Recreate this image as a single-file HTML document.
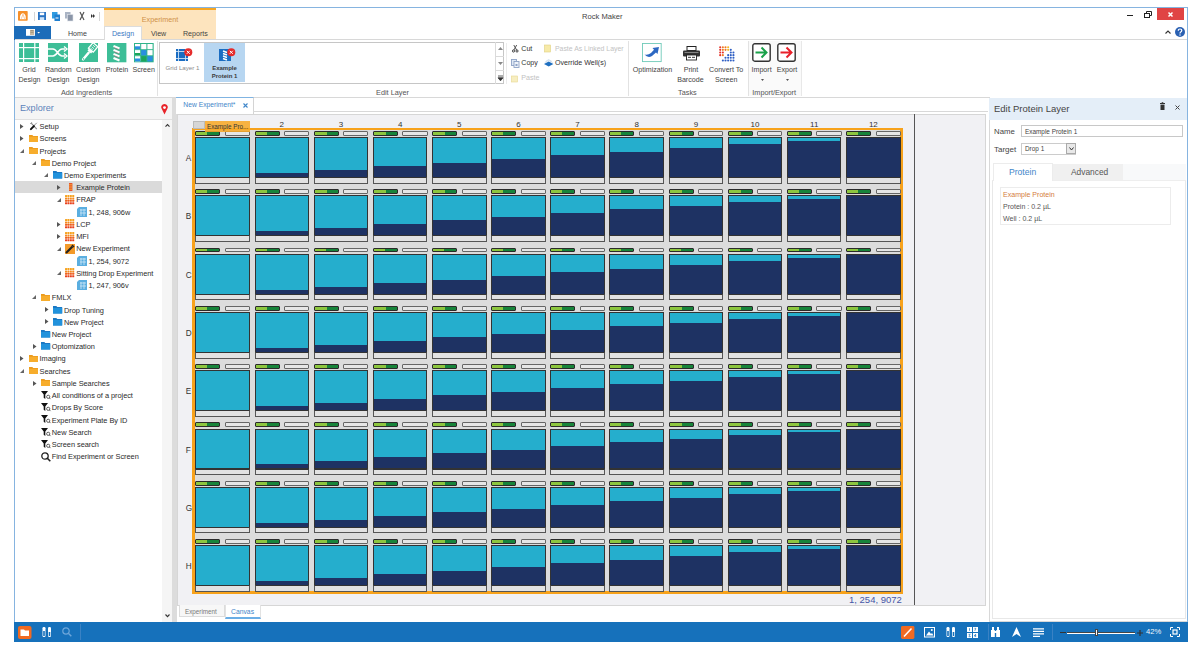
<!DOCTYPE html><html><head><meta charset='utf-8'><style>
*{box-sizing:border-box}
body{margin:0;width:1200px;height:653px;background:#fff;position:relative;overflow:hidden;font-family:"Liberation Sans",sans-serif;color:#333}
.a{position:absolute}
.t{position:absolute;white-space:nowrap;line-height:1}
svg{position:absolute;overflow:visible}
</style></head><body><div class="a" style="left:14px;top:7px;width:1174px;height:635px;border:1px solid #86b4e0;border-bottom:none"></div>
<svg style="left:18px;top:11px" width="9.7" height="9.7" viewBox="0 0 9.7 9.7"><rect x="0" y="0" width="9.7" height="9.7" rx="0.8" fill="#f6902a"/><path d="M2 8.2 Q1.5 4.5 3.2 3 Q4.8 1.6 6.5 3 Q8.3 4.5 7.8 8.2 Z" fill="#fff"/><path d="M3.3 7.8 L5 3.2 L6.6 7.8" stroke="#f8b070" stroke-width="0.7" fill="none"/></svg>
<div class="a" style="left:33.5px;top:12px;width:1px;height:9px;background:#d6d6d6"></div>
<svg style="left:38px;top:12px" width="8" height="8" viewBox="0 0 8 8"><rect x="0" y="0" width="8" height="8" fill="#2a74c4"/><rect x="1.8" y="0.6" width="4.4" height="2.6" fill="#fff"/><rect x="1.8" y="5.2" width="4.4" height="2.8" fill="#cfe3f6"/></svg>
<svg style="left:51.5px;top:11.5px" width="8" height="9" viewBox="0 0 8 9"><rect x="0" y="0" width="5.5" height="6.5" fill="#2f9be0"/><rect x="2.5" y="2.5" width="5.5" height="6.5" fill="#1f7fcf"/><path d="M3.5 6 h3" stroke="#fff" stroke-width="1"/></svg>
<svg style="left:65px;top:11.5px" width="8" height="9" viewBox="0 0 8 9"><rect x="0" y="0" width="5.5" height="6.5" fill="#aab4c4"/><rect x="2.5" y="2.5" width="5.5" height="6.5" fill="#8b96a8" stroke="#dfe3ea" stroke-width="0.6"/></svg>
<svg style="left:79px;top:12px" width="6" height="8" viewBox="0 0 6 8"><path d="M1 0 L5 8 M5 0 L1 8" stroke="#555" stroke-width="1.2"/></svg>
<svg style="left:91px;top:14px" width="4" height="4" viewBox="0 0 4 4"><path d="M0 0 L2 2 L0 4 Z M2 0 L4 2 L2 4 Z" fill="#333"/></svg>
<div class="a" style="left:99px;top:12px;width:1px;height:9px;background:#d6d6d6"></div>
<div class="t" style="left:582px;top:12.6px;font-size:7.6px;color:#444;">Rock Maker</div>
<div class="a" style="left:1127px;top:14.5px;width:6px;height:1.5px;background:#222"></div>
<svg style="left:1144px;top:11px" width="8" height="7" viewBox="0 0 8 7"><rect x="0.5" y="2.5" width="5" height="4" fill="none" stroke="#222" stroke-width="1"/><path d="M2.5 2.5 V0.5 H7.5 V4.5 H5.5" fill="none" stroke="#222" stroke-width="1"/></svg>
<div class="a" style="left:1156.5px;top:8px;width:27px;height:11.5px;background:#e04444"></div>
<svg style="left:1167.5px;top:11.5px" width="5" height="5" viewBox="0 0 5 5"><path d="M0.5 0.5 L4.5 4.5 M4.5 0.5 L0.5 4.5" stroke="#fff" stroke-width="1.5"/></svg>
<svg style="left:1165px;top:30px" width="6" height="4" viewBox="0 0 6 4"><path d="M0.5 3.5 L3 1 L5.5 3.5" stroke="#333" stroke-width="1.1" fill="none"/></svg>
<svg style="left:1175px;top:27px" width="10" height="10" viewBox="0 0 10 10"><circle cx="5" cy="5" r="5" fill="#2a60b2"/><path d="M3.3 3.8 Q3.3 2 5 2 Q6.8 2 6.8 3.6 Q6.8 4.6 5.5 5.2 Q5 5.5 5 6.4" stroke="#fff" stroke-width="1.2" fill="none"/><circle cx="5" cy="8" r="0.7" fill="#fff"/></svg>
<div class="a" style="left:104px;top:8px;width:112px;height:32px;background:#fde4be"></div>
<div class="a" style="left:104px;top:8px;width:112px;height:2px;background:#f6a623"></div>
<div class="t" style="left:141.8px;top:15.5px;font-size:7.2px;color:#cf8f48;">Experiment</div>
<div class="a" style="left:14px;top:26px;width:37px;height:13.5px;background:#1c6cb9"></div>
<svg style="left:25.6px;top:29.2px" width="15" height="7" viewBox="0 0 15 7"><rect x="0" y="0" width="9" height="6.8" fill="#fff"/><rect x="4" y="0.8" width="4.2" height="5.2" fill="#c9b9a0"/><path d="M4.5 1.5 h3 M4.5 3.3 h3" stroke="#8a7a60" stroke-width="0.6"/><path d="M11.3 3.1 H14 L12.65 4.6 Z" fill="#fff"/></svg>
<div class="a" style="left:15px;top:39px;width:1172px;height:1px;background:#d8d8d8"></div>
<div class="a" style="left:104px;top:26px;width:37.5px;height:14px;background:#fff;border:1px solid #dcdcdc;border-bottom:none"></div>
<div class="t" style="left:68px;top:31.3px;font-size:7.1px;color:#444;">Home</div>
<div class="t" style="left:112px;top:31.3px;font-size:7.1px;color:#3a78c2;">Design</div>
<div class="t" style="left:151px;top:31.3px;font-size:7.1px;color:#444;">View</div>
<div class="t" style="left:183px;top:31.3px;font-size:7.1px;color:#444;">Reports</div>
<div class="a" style="left:15px;top:97px;width:1172px;height:1px;background:#d8d8d8"></div>
<svg style="left:19px;top:43px" width="20" height="19" viewBox="0 0 20 19"><rect width="20" height="19" fill="#3dbe97"/><rect x="4" y="0" width="1.2" height="19" fill="#fff"/><rect x="15.2" y="0" width="1.2" height="19" fill="#fff"/><rect x="0" y="4" width="20" height="1.2" fill="#fff"/><rect x="0" y="15" width="20" height="1.2" fill="#fff"/></svg>
<svg style="left:48.3px;top:43px" width="20" height="19" viewBox="0 0 20 19"><rect width="20" height="19" fill="#3dbe97"/><path d="M0 6 H5 C9 6 10 13 14 13 H17 M0 13 H5 C9 13 10 6 14 6 H17" stroke="#fff" stroke-width="1.6" fill="none"/><path d="M16 3.5 L19 6 L16 8.5 M16 10.5 L19 13 L16 15.5" stroke="#fff" stroke-width="1.4" fill="none"/></svg>
<svg style="left:78.5px;top:43px;overflow:hidden" width="19.5" height="19.3" viewBox="0 0 19.5 19.3"><rect width="19.5" height="19.3" fill="#3dbe97"/><g transform="rotate(40 9.75 9.65)"><rect x="6.6" y="-0.8" width="6.3" height="7.2" fill="none" stroke="#fff" stroke-width="1.3"/><path d="M8.2 1.2 h3 M8.2 3.2 h3 M8.2 5 h3" stroke="#fff" stroke-width="0.8"/><rect x="7.4" y="6.6" width="4.7" height="2.2" fill="#fff"/><rect x="8.5" y="8.6" width="2.5" height="11" rx="1.25" fill="#fff"/><circle cx="9.75" cy="17.8" r="0.7" fill="#3dbe97"/></g></svg>
<svg style="left:107.2px;top:43px" width="19.4" height="19.3" viewBox="0 0 19.4 19.3"><rect width="19.4" height="19.3" fill="#3dbe97"/><path d="M6.5 3 L12.5 5.5 M6.5 7 L12.5 9.5 M6.5 11 L12.5 13.5 M6.5 15 L12.5 17.5" stroke="#fff" stroke-width="2.2"/><path d="M7 4.6 L12 6.6 M7 8.6 L12 10.6 M7 12.6 L12 14.6" stroke="#b06070" stroke-width="0.6"/></svg>
<svg style="left:134.1px;top:43px" width="19.7" height="19.3" viewBox="0 0 19.7 19.3"><rect width="19.7" height="19.3" fill="#2fb48a"/><rect x="1" y="1" width="5.2" height="5.2" fill="#fff"/><rect x="1" y="3.3" width="5.2" height="2.9" fill="#2a8ee0"/><rect x="7.2" y="1" width="5.2" height="5.2" fill="#fff"/><rect x="13.4" y="1" width="5.2" height="5.2" fill="#fff"/><rect x="1" y="7.1" width="5.2" height="5.2" fill="#fff"/><rect x="1" y="10" width="5.2" height="2.3" fill="#1ea55a"/><rect x="7.2" y="7.1" width="5.2" height="5.2" fill="#2a8ee0"/><rect x="13.4" y="7.1" width="5.2" height="5.2" fill="#fff"/><rect x="1" y="13.2" width="5.2" height="5.2" fill="#fff"/><rect x="1" y="15.5" width="5.2" height="2.9" fill="#2a8ee0"/><rect x="7.2" y="13.2" width="5.2" height="5.2" fill="#1ea55a"/><rect x="13.4" y="13.2" width="5.2" height="5.2" fill="#2a8ee0"/></svg>
<div class="t" style="left:-71px;width:200px;text-align:center;top:66.5px;font-size:7.1px;color:#444;">Grid</div>
<div class="t" style="left:-70.5px;width:200px;text-align:center;top:77.2px;font-size:7.1px;color:#444;">Design</div>
<div class="t" style="left:-41.7px;width:200px;text-align:center;top:66.5px;font-size:7.1px;color:#444;">Random</div>
<div class="t" style="left:-41.7px;width:200px;text-align:center;top:77.2px;font-size:7.1px;color:#444;">Design</div>
<div class="t" style="left:-11.700000000000003px;width:200px;text-align:center;top:66.5px;font-size:7.1px;color:#444;">Custom</div>
<div class="t" style="left:-11.700000000000003px;width:200px;text-align:center;top:77.2px;font-size:7.1px;color:#444;">Design</div>
<div class="t" style="left:17px;width:200px;text-align:center;top:66.5px;font-size:7.1px;color:#444;">Protein</div>
<div class="t" style="left:43.69999999999999px;width:200px;text-align:center;top:66.5px;font-size:7.1px;color:#444;">Screen</div>
<div class="t" style="left:-13.5px;width:200px;text-align:center;top:88.5px;font-size:7.3px;color:#555;">Add Ingredients</div>
<div class="a" style="left:157.3px;top:41px;width:1px;height:55px;background:#e2e2e2"></div>
<div class="a" style="left:159.3px;top:41.7px;width:345px;height:42.6px;border:1px solid #c6c6c6;background:#fff"></div>
<div class="a" style="left:495.3px;top:41.7px;width:1px;height:42.6px;background:#dadada"></div>
<div class="a" style="left:495.3px;top:56.3px;width:9px;height:1px;background:#dadada"></div>
<div class="a" style="left:495.3px;top:70.3px;width:9px;height:1px;background:#dadada"></div>
<svg style="left:497.5px;top:47px" width="5" height="3" viewBox="0 0 5 3"><path d="M0 3 L2.5 0 L5 3 Z" fill="#888"/></svg>
<svg style="left:497.5px;top:62px" width="5" height="3" viewBox="0 0 5 3"><path d="M0 0 L5 0 L2.5 3 Z" fill="#888"/></svg>
<svg style="left:497.5px;top:75.5px" width="5" height="5" viewBox="0 0 5 5"><path d="M0 0 H5 M0 1.8 L5 1.8 L2.5 4.8 Z" stroke="#333" stroke-width="0.8" fill="#333"/></svg>
<div class="a" style="left:204.1px;top:43px;width:41.2px;height:39.3px;background:#b7d6f1"></div>
<svg style="left:175.8px;top:49px" width="16.5" height="12" viewBox="0 0 16.5 12"><rect x="0" y="0" width="12" height="12" fill="#1a6dc2"/><path d="M2.5 0 V12 M9.5 0 V12 M0 2.5 H12 M0 9.5 H12" stroke="#cfe2f5" stroke-width="0.9"/><circle cx="12.3" cy="3.3" r="4" fill="#e52b2b"/><path d="M10.8 1.8 L13.8 4.8 M13.8 1.8 L10.8 4.8" stroke="#fff" stroke-width="1"/></svg>
<svg style="left:218.7px;top:49px" width="16.5" height="12" viewBox="0 0 16.5 12"><rect x="0" y="0" width="12" height="12" fill="#1a6dc2"/><path d="M4 2 L8 3.5 M4 4.5 L8 6 M4 7 L8 8.5 M4 9.5 L8 11" stroke="#fff" stroke-width="1.4"/><circle cx="12.3" cy="3.3" r="4" fill="#e52b2b"/><path d="M10.8 1.8 L13.8 4.8 M13.8 1.8 L10.8 4.8" stroke="#fff" stroke-width="1"/></svg>
<div class="t" style="left:82.5px;width:200px;text-align:center;top:65px;font-size:6.2px;color:#8a8a8a;">Grid Layer 1</div>
<div class="t" style="left:124.5px;width:200px;text-align:center;top:65px;font-size:6px;color:#3a3a3a;font-weight:bold">Example</div>
<div class="t" style="left:124.5px;width:200px;text-align:center;top:72.5px;font-size:6px;color:#3a3a3a;font-weight:bold">Protein 1</div>
<div class="a" style="left:506px;top:43px;width:1px;height:41px;background:#ececec"></div>
<svg style="left:511.9px;top:44.5px" width="6.5" height="7.5" viewBox="0 0 6.5 7.5"><path d="M1.8 0 L4.6 5 M4.7 0 L1.9 5" stroke="#444" stroke-width="0.9"/><circle cx="1.5" cy="6" r="1.1" fill="none" stroke="#333" stroke-width="0.9"/><circle cx="5" cy="6" r="1.1" fill="none" stroke="#333" stroke-width="0.9"/></svg>
<div class="t" style="left:521.3px;top:45.9px;font-size:7.1px;color:#333;">Cut</div>
<svg style="left:511px;top:58.5px" width="8.5" height="9" viewBox="0 0 8.5 9"><rect x="0.5" y="0.5" width="5" height="6" fill="#dfe8f4" stroke="#8ea3c6" stroke-width="0.9"/><rect x="3" y="2.5" width="5" height="6" fill="#eef3fa" stroke="#8ea3c6" stroke-width="0.9"/><rect x="4.5" y="5" width="2" height="2" fill="#8ea3c6"/></svg>
<div class="t" style="left:521.3px;top:60.4px;font-size:7.1px;color:#333;">Copy</div>
<svg style="left:511px;top:74.5px" width="8" height="7" viewBox="0 0 8 7"><rect x="0.5" y="1" width="6" height="6" fill="#f7eec0" stroke="#e8d890" stroke-width="0.6"/></svg>
<div class="t" style="left:521.3px;top:75.1px;font-size:7.1px;color:#c2c2c2;">Paste</div>
<svg style="left:544px;top:44px" width="8" height="8" viewBox="0 0 8 8"><rect x="0.5" y="1" width="6" height="7" fill="#f7eaa8" stroke="#e0d080" stroke-width="0.6"/></svg>
<div class="t" style="left:555px;top:45.9px;font-size:6.9px;color:#c2c2c2;">Paste As Linked Layer</div>
<svg style="left:543.5px;top:58.5px" width="9.5" height="8.5" viewBox="0 0 9.5 8.5"><path d="M0 5 L4.7 2.6 L9.4 5 L4.7 7.6 Z" fill="#1f6fc0"/><path d="M0.8 3.6 L4.7 1.4 L8.6 3.6 M1.6 2.4 L4.7 0.6 L7.8 2.4" stroke="#b9cfe6" stroke-width="0.6" fill="none"/></svg>
<div class="t" style="left:555px;top:60.4px;font-size:7.1px;color:#333;">Override Well(s)</div>
<div class="t" style="left:292.5px;width:200px;text-align:center;top:88.5px;font-size:7.3px;color:#555;">Edit Layer</div>
<div class="a" style="left:627.5px;top:41px;width:1px;height:55px;background:#e2e2e2"></div>
<svg style="left:642px;top:43.3px" width="19.7" height="19.1" viewBox="0 0 19.7 19.1"><rect x="0.5" y="0.5" width="18.7" height="18.1" fill="none" stroke="#6fcab9" stroke-width="0.9"/><path d="M2.5 11.5 Q6 15.5 10 13 L14 9.5 L15.5 11 L17 4 L10.5 5 L12 6.8 L9 10 Q6 12.5 2.5 11.5 Z" fill="#2d68c2"/></svg>
<svg style="left:682.8px;top:45.6px" width="17" height="14" viewBox="0 0 17 14"><rect x="4" y="0.5" width="9" height="4" fill="#fff" stroke="#222" stroke-width="1"/><rect x="0" y="4.5" width="17" height="6" rx="1" fill="#333"/><rect x="1.5" y="6.2" width="14" height="0.8" fill="#999"/><rect x="3.5" y="9" width="10" height="5" fill="#fff" stroke="#222" stroke-width="0.9"/><path d="M5 11.3 h3 M9 11.3 h3" stroke="#333" stroke-width="1"/></svg>
<svg style="left:718.8px;top:45.6px" width="15.5" height="15" viewBox="0 0 15.5 15"><circle cx="1.20" cy="1.20" r="1.05" fill="#e5332a"/><circle cx="3.85" cy="1.20" r="1.05" fill="#f07a22"/><circle cx="6.50" cy="1.20" r="1.05" fill="#f07a22"/><circle cx="9.15" cy="1.20" r="1.05" fill="#f6b824"/><circle cx="1.20" cy="3.85" r="1.05" fill="#e5332a"/><circle cx="3.85" cy="3.85" r="1.05" fill="#f07a22"/><circle cx="6.50" cy="3.85" r="1.05" fill="#f07a22"/><circle cx="9.15" cy="3.85" r="1.05" fill="#f6b824"/><circle cx="11.80" cy="3.85" r="1.05" fill="#2f5fc4"/><circle cx="1.20" cy="6.50" r="1.05" fill="#e5332a"/><circle cx="3.85" cy="6.50" r="1.05" fill="#e5332a"/><circle cx="11.80" cy="6.50" r="1.05" fill="#2f5fc4"/><circle cx="14.45" cy="6.50" r="1.05" fill="#2f5fc4"/><circle cx="1.20" cy="9.15" r="1.05" fill="#e5332a"/><circle cx="3.85" cy="9.15" r="1.05" fill="#f07a22"/><circle cx="9.15" cy="9.15" r="1.05" fill="#2f5fc4"/><circle cx="11.80" cy="9.15" r="1.05" fill="#2f5fc4"/><circle cx="14.45" cy="9.15" r="1.05" fill="#2f5fc4"/><circle cx="6.50" cy="11.80" r="1.05" fill="#2f5fc4"/><circle cx="9.15" cy="11.80" r="1.05" fill="#2f5fc4"/><circle cx="11.80" cy="11.80" r="1.05" fill="#2f5fc4"/><circle cx="14.45" cy="11.80" r="1.05" fill="#2f5fc4"/><circle cx="3.85" cy="14.45" r="1.05" fill="#2f5fc4"/><circle cx="6.50" cy="14.45" r="1.05" fill="#2f5fc4"/><circle cx="9.15" cy="14.45" r="1.05" fill="#2f5fc4"/><circle cx="11.80" cy="14.45" r="1.05" fill="#2f5fc4"/><circle cx="14.45" cy="14.45" r="1.05" fill="#2f5fc4"/></svg>
<div class="t" style="left:552.5px;width:200px;text-align:center;top:66.5px;font-size:7.1px;color:#444;">Optimization</div>
<div class="t" style="left:591px;width:200px;text-align:center;top:66.5px;font-size:7.1px;color:#444;">Print</div>
<div class="t" style="left:590.4px;width:200px;text-align:center;top:77.2px;font-size:7.1px;color:#444;">Barcode</div>
<div class="t" style="left:626.2px;width:200px;text-align:center;top:66.5px;font-size:7.1px;color:#444;">Convert To</div>
<div class="t" style="left:626.2px;width:200px;text-align:center;top:77.2px;font-size:7.1px;color:#444;">Screen</div>
<div class="t" style="left:587.4px;width:200px;text-align:center;top:88.5px;font-size:7.3px;color:#555;">Tasks</div>
<div class="a" style="left:747.6px;top:41px;width:1px;height:55px;background:#e2e2e2"></div>
<div class="a" style="left:748.6px;top:41px;width:52px;height:55px;background:#fafafa"></div>
<svg style="left:751.9px;top:43.2px" width="19" height="19" viewBox="0 0 19 19"><rect x="0.8" y="0.8" width="17.4" height="17.4" rx="2" fill="#fff" stroke="#333" stroke-width="1.4"/><path d="M3.5 9.5 H14 M9.5 4.5 L14.5 9.5 L9.5 14.5" stroke="#1aa24a" stroke-width="2" fill="none"/></svg>
<svg style="left:777.2px;top:43.2px" width="19" height="19" viewBox="0 0 19 19"><rect x="0.8" y="0.8" width="17.4" height="17.4" rx="2" fill="#fff" stroke="#333" stroke-width="1.4"/><path d="M3.5 9.5 H14 M9.5 4.5 L14.5 9.5 L9.5 14.5" stroke="#e8202a" stroke-width="2" fill="none"/></svg>
<div class="t" style="left:661.6px;width:200px;text-align:center;top:66.5px;font-size:7.1px;color:#444;">Import</div>
<div class="t" style="left:687.1px;width:200px;text-align:center;top:66.5px;font-size:7.1px;color:#444;">Export</div>
<svg style="left:760.5px;top:78.5px" width="3" height="2" viewBox="0 0 3 2"><path d="M0 0 H3 L1.5 2 Z" fill="#555"/></svg>
<svg style="left:786px;top:78.5px" width="3" height="2" viewBox="0 0 3 2"><path d="M0 0 H3 L1.5 2 Z" fill="#555"/></svg>
<div class="t" style="left:674.2px;width:200px;text-align:center;top:88.5px;font-size:7.3px;color:#555;">Import/Export</div>
<div class="a" style="left:800.7px;top:41px;width:1px;height:55px;background:#e8e8e8"></div>
<div class="a" style="left:15px;top:98px;width:158px;height:22px;background:#f5f5f5;border-bottom:1px solid #e0e0e0"></div>
<div class="t" style="left:20px;top:103.6px;font-size:9.1px;color:#5b82ba;">Explorer</div>
<svg style="left:161px;top:104px" width="7" height="11" viewBox="0 0 7 11"><path d="M3.5 10.5 L0.8 5 A3.2 3.2 0 1 1 6.2 5 Z" fill="#e8242a"/><circle cx="3.5" cy="3.6" r="1.4" fill="#fff"/></svg>
<div class="a" style="left:161.5px;top:120px;width:11.5px;height:502px;background:#f5f5f5"></div>
<svg style="left:164.8px;top:124px" width="5" height="3.2" viewBox="0 0 5 3.2"><path d="M0.5 2.7 L2.5 0.6 L4.5 2.7" stroke="#333" stroke-width="1.1" fill="none"/></svg>
<svg style="left:165px;top:613.8px" width="5" height="3.2" viewBox="0 0 5 3.2"><path d="M0.5 0.5 L2.5 2.6 L4.5 0.5" stroke="#333" stroke-width="1.1" fill="none"/></svg>
<div class="a" style="left:172.3px;top:98px;width:4.4px;height:524px;background:#dcdcdc"></div>
<div class="a" style="left:14.5px;top:181px;width:147px;height:11.7px;background:#dadada"></div>
<svg style="left:20.3px;top:123.7px" width="4" height="5" viewBox="0 0 4 5"><path d="M0 0 L3.5 2.5 L0 5 Z" fill="#555"/></svg>
<svg style="left:29.8px;top:122.4px" width="7.5" height="8" viewBox="0 0 7.5 8"><path d="M1.2 1.2 L6.8 7.2" stroke="#888" stroke-width="1.1"/><path d="M0.3 1.8 L1.8 0.3" stroke="#888" stroke-width="1"/><path d="M3.8 3.8 L6.8 0.8" stroke="#888" stroke-width="0.9"/><path d="M0.9 7.1 L3.9 4.1" stroke="#111" stroke-width="2" stroke-linecap="round"/></svg>
<div class="t" style="left:39.6px;top:123.10000000000001px;font-size:7.4px;color:#2a2a2a;letter-spacing:-0.04px">Setup</div>
<svg style="left:20.3px;top:135.93px" width="4" height="5" viewBox="0 0 4 5"><path d="M0 0 L3.5 2.5 L0 5 Z" fill="#555"/></svg>
<svg style="left:28.6px;top:134.83px" width="9" height="7" viewBox="0 0 9 7"><path d="M0 0 H3.3 L4.3 1 H9 V7 H0 Z" fill="#eb9a1c"/><rect x="0" y="1.8" width="9" height="5.2" fill="#f7ad2c"/></svg>
<div class="t" style="left:39.6px;top:135.33px;font-size:7.4px;color:#2a2a2a;letter-spacing:-0.04px">Screens</div>
<svg style="left:20.0px;top:148.66px" width="4.5" height="4.5" viewBox="0 0 4.5 4.5"><path d="M4 0 L4 4 L0 4 Z" fill="#666"/></svg>
<svg style="left:28.6px;top:147.06px" width="9" height="7" viewBox="0 0 9 7"><path d="M0 0 H3.3 L4.3 1 H9 V7 H0 Z" fill="#eb9a1c"/><rect x="0" y="1.8" width="9" height="5.2" fill="#f7ad2c"/></svg>
<div class="t" style="left:39.6px;top:147.56px;font-size:7.4px;color:#2a2a2a;letter-spacing:-0.04px">Projects</div>
<svg style="left:32.2px;top:160.89px" width="4.5" height="4.5" viewBox="0 0 4.5 4.5"><path d="M4 0 L4 4 L0 4 Z" fill="#666"/></svg>
<svg style="left:40.8px;top:159.29px" width="9" height="7" viewBox="0 0 9 7"><path d="M0 0 H3.3 L4.3 1 H9 V7 H0 Z" fill="#eb9a1c"/><rect x="0" y="1.8" width="9" height="5.2" fill="#f7ad2c"/></svg>
<div class="t" style="left:51.8px;top:159.79px;font-size:7.4px;color:#2a2a2a;letter-spacing:-0.04px">Demo Project</div>
<svg style="left:44.4px;top:173.12px" width="4.5" height="4.5" viewBox="0 0 4.5 4.5"><path d="M4 0 L4 4 L0 4 Z" fill="#666"/></svg>
<svg style="left:53.0px;top:171.22px" width="9.2" height="7.5" viewBox="0 0 9.2 7.5"><path d="M0 0 H3.3 L4.3 1 H9.2 V7.5 H0 Z" fill="#1a78c4"/><rect x="0" y="2" width="9.2" height="5.5" fill="#2192dc"/></svg>
<div class="t" style="left:64.0px;top:172.02px;font-size:7.4px;color:#2a2a2a;letter-spacing:-0.04px">Demo Experiments</div>
<svg style="left:56.89999999999999px;top:184.85000000000002px" width="4" height="5" viewBox="0 0 4 5"><path d="M0 0 L3.5 2.5 L0 5 Z" fill="#555"/></svg>
<svg style="left:68.89999999999999px;top:183.35000000000002px" width="3.4" height="8" viewBox="0 0 3.4 8"><rect x="0" y="0" width="3.4" height="8" fill="#e8502a"/><path d="M0 1.8 h3.4 M0 4 h3.4 M0 6.2 h3.4" stroke="#f6c040" stroke-width="0.8"/></svg>
<div class="t" style="left:76.19999999999999px;top:184.25000000000003px;font-size:7.4px;color:#2a2a2a;letter-spacing:-0.04px">Example Protein</div>
<svg style="left:56.599999999999994px;top:197.57999999999998px" width="4.5" height="4.5" viewBox="0 0 4.5 4.5"><path d="M4 0 L4 4 L0 4 Z" fill="#666"/></svg>
<svg style="left:65.19999999999999px;top:194.98px" width="9.5" height="9.5" viewBox="0 0 9.5 9.5"><rect x="0.0" y="0.0" width="2.05" height="2.05" rx="0.5" fill="#f6a21e"/><rect x="2.4" y="0.0" width="2.05" height="2.05" rx="0.5" fill="#f6a21e"/><rect x="4.8" y="0.0" width="2.05" height="2.05" rx="0.5" fill="#f6a21e"/><rect x="7.2" y="0.0" width="2.05" height="2.05" rx="0.5" fill="#f6a21e"/><rect x="0.0" y="2.4" width="2.05" height="2.05" rx="0.5" fill="#f58a1e"/><rect x="2.4" y="2.4" width="2.05" height="2.05" rx="0.5" fill="#f58a1e"/><rect x="4.8" y="2.4" width="2.05" height="2.05" rx="0.5" fill="#f58a1e"/><rect x="7.2" y="2.4" width="2.05" height="2.05" rx="0.5" fill="#f58a1e"/><rect x="0.0" y="4.8" width="2.05" height="2.05" rx="0.5" fill="#ee5f1e"/><rect x="2.4" y="4.8" width="2.05" height="2.05" rx="0.5" fill="#ee5f1e"/><rect x="4.8" y="4.8" width="2.05" height="2.05" rx="0.5" fill="#ee5f1e"/><rect x="7.2" y="4.8" width="2.05" height="2.05" rx="0.5" fill="#ee5f1e"/><rect x="0.0" y="7.2" width="2.05" height="2.05" rx="0.5" fill="#e8401c"/><rect x="2.4" y="7.2" width="2.05" height="2.05" rx="0.5" fill="#e8401c"/><rect x="4.8" y="7.2" width="2.05" height="2.05" rx="0.5" fill="#e8401c"/><rect x="7.2" y="7.2" width="2.05" height="2.05" rx="0.5" fill="#e8401c"/></svg>
<div class="t" style="left:76.19999999999999px;top:196.48px;font-size:7.4px;color:#2a2a2a;letter-spacing:-0.04px">FRAP</div>
<svg style="left:77.1px;top:206.81px" width="10" height="10" viewBox="0 0 10 10"><path d="M2 0 H10 V10 H0 V2 Z" fill="#5aaee0"/><path d="M3 3 h6 M3 6 h6 M4 2 v7 M7 2 v7" stroke="#cfe8f8" stroke-width="0.8"/></svg>
<div class="t" style="left:88.4px;top:208.71px;font-size:7.4px;color:#2a2a2a;letter-spacing:-0.04px">1, 248, 906w</div>
<svg style="left:56.89999999999999px;top:221.54000000000002px" width="4" height="5" viewBox="0 0 4 5"><path d="M0 0 L3.5 2.5 L0 5 Z" fill="#555"/></svg>
<svg style="left:65.19999999999999px;top:219.44000000000003px" width="9.5" height="9.5" viewBox="0 0 9.5 9.5"><rect x="0.0" y="0.0" width="2.05" height="2.05" rx="0.5" fill="#f6a21e"/><rect x="2.4" y="0.0" width="2.05" height="2.05" rx="0.5" fill="#f6a21e"/><rect x="4.8" y="0.0" width="2.05" height="2.05" rx="0.5" fill="#f6a21e"/><rect x="7.2" y="0.0" width="2.05" height="2.05" rx="0.5" fill="#f6a21e"/><rect x="0.0" y="2.4" width="2.05" height="2.05" rx="0.5" fill="#f58a1e"/><rect x="2.4" y="2.4" width="2.05" height="2.05" rx="0.5" fill="#f58a1e"/><rect x="4.8" y="2.4" width="2.05" height="2.05" rx="0.5" fill="#f58a1e"/><rect x="7.2" y="2.4" width="2.05" height="2.05" rx="0.5" fill="#f58a1e"/><rect x="0.0" y="4.8" width="2.05" height="2.05" rx="0.5" fill="#ee5f1e"/><rect x="2.4" y="4.8" width="2.05" height="2.05" rx="0.5" fill="#ee5f1e"/><rect x="4.8" y="4.8" width="2.05" height="2.05" rx="0.5" fill="#ee5f1e"/><rect x="7.2" y="4.8" width="2.05" height="2.05" rx="0.5" fill="#ee5f1e"/><rect x="0.0" y="7.2" width="2.05" height="2.05" rx="0.5" fill="#e8401c"/><rect x="2.4" y="7.2" width="2.05" height="2.05" rx="0.5" fill="#e8401c"/><rect x="4.8" y="7.2" width="2.05" height="2.05" rx="0.5" fill="#e8401c"/><rect x="7.2" y="7.2" width="2.05" height="2.05" rx="0.5" fill="#e8401c"/></svg>
<div class="t" style="left:76.19999999999999px;top:220.94000000000003px;font-size:7.4px;color:#2a2a2a;letter-spacing:-0.04px">LCP</div>
<svg style="left:56.89999999999999px;top:233.77px" width="4" height="5" viewBox="0 0 4 5"><path d="M0 0 L3.5 2.5 L0 5 Z" fill="#555"/></svg>
<svg style="left:65.19999999999999px;top:231.67000000000002px" width="9.5" height="9.5" viewBox="0 0 9.5 9.5"><rect x="0.0" y="0.0" width="2.05" height="2.05" rx="0.5" fill="#f6a21e"/><rect x="2.4" y="0.0" width="2.05" height="2.05" rx="0.5" fill="#f6a21e"/><rect x="4.8" y="0.0" width="2.05" height="2.05" rx="0.5" fill="#f6a21e"/><rect x="7.2" y="0.0" width="2.05" height="2.05" rx="0.5" fill="#f6a21e"/><rect x="0.0" y="2.4" width="2.05" height="2.05" rx="0.5" fill="#f58a1e"/><rect x="2.4" y="2.4" width="2.05" height="2.05" rx="0.5" fill="#f58a1e"/><rect x="4.8" y="2.4" width="2.05" height="2.05" rx="0.5" fill="#f58a1e"/><rect x="7.2" y="2.4" width="2.05" height="2.05" rx="0.5" fill="#f58a1e"/><rect x="0.0" y="4.8" width="2.05" height="2.05" rx="0.5" fill="#ee5f1e"/><rect x="2.4" y="4.8" width="2.05" height="2.05" rx="0.5" fill="#ee5f1e"/><rect x="4.8" y="4.8" width="2.05" height="2.05" rx="0.5" fill="#ee5f1e"/><rect x="7.2" y="4.8" width="2.05" height="2.05" rx="0.5" fill="#ee5f1e"/><rect x="0.0" y="7.2" width="2.05" height="2.05" rx="0.5" fill="#e8401c"/><rect x="2.4" y="7.2" width="2.05" height="2.05" rx="0.5" fill="#e8401c"/><rect x="4.8" y="7.2" width="2.05" height="2.05" rx="0.5" fill="#e8401c"/><rect x="7.2" y="7.2" width="2.05" height="2.05" rx="0.5" fill="#e8401c"/></svg>
<div class="t" style="left:76.19999999999999px;top:233.17000000000002px;font-size:7.4px;color:#2a2a2a;letter-spacing:-0.04px">MFI</div>
<svg style="left:56.599999999999994px;top:246.5px" width="4.5" height="4.5" viewBox="0 0 4.5 4.5"><path d="M4 0 L4 4 L0 4 Z" fill="#666"/></svg>
<svg style="left:64.89999999999999px;top:243.5px" width="10" height="10" viewBox="0 0 10 10"><rect x="0" y="0" width="10" height="10" fill="#f39a2a"/><path d="M1 9 L7.5 2.5" stroke="#222" stroke-width="2.2"/><path d="M7 1 L9 3" stroke="#222" stroke-width="1.4"/></svg>
<div class="t" style="left:76.19999999999999px;top:245.4px;font-size:7.4px;color:#2a2a2a;letter-spacing:-0.04px">New Experiment</div>
<svg style="left:77.1px;top:255.73000000000002px" width="10" height="10" viewBox="0 0 10 10"><path d="M2 0 H10 V10 H0 V2 Z" fill="#5aaee0"/><path d="M3 3 h6 M3 6 h6 M4 2 v7 M7 2 v7" stroke="#cfe8f8" stroke-width="0.8"/></svg>
<div class="t" style="left:88.4px;top:257.63px;font-size:7.4px;color:#2a2a2a;letter-spacing:-0.04px">1, 254, 9072</div>
<svg style="left:56.599999999999994px;top:270.96px" width="4.5" height="4.5" viewBox="0 0 4.5 4.5"><path d="M4 0 L4 4 L0 4 Z" fill="#666"/></svg>
<svg style="left:65.19999999999999px;top:268.35999999999996px" width="9.5" height="9.5" viewBox="0 0 9.5 9.5"><rect x="0.0" y="0.0" width="2.05" height="2.05" rx="0.5" fill="#f6a21e"/><rect x="2.4" y="0.0" width="2.05" height="2.05" rx="0.5" fill="#f6a21e"/><rect x="4.8" y="0.0" width="2.05" height="2.05" rx="0.5" fill="#f6a21e"/><rect x="7.2" y="0.0" width="2.05" height="2.05" rx="0.5" fill="#f6a21e"/><rect x="0.0" y="2.4" width="2.05" height="2.05" rx="0.5" fill="#f58a1e"/><rect x="2.4" y="2.4" width="2.05" height="2.05" rx="0.5" fill="#f58a1e"/><rect x="4.8" y="2.4" width="2.05" height="2.05" rx="0.5" fill="#f58a1e"/><rect x="7.2" y="2.4" width="2.05" height="2.05" rx="0.5" fill="#f58a1e"/><rect x="0.0" y="4.8" width="2.05" height="2.05" rx="0.5" fill="#ee5f1e"/><rect x="2.4" y="4.8" width="2.05" height="2.05" rx="0.5" fill="#ee5f1e"/><rect x="4.8" y="4.8" width="2.05" height="2.05" rx="0.5" fill="#ee5f1e"/><rect x="7.2" y="4.8" width="2.05" height="2.05" rx="0.5" fill="#ee5f1e"/><rect x="0.0" y="7.2" width="2.05" height="2.05" rx="0.5" fill="#e8401c"/><rect x="2.4" y="7.2" width="2.05" height="2.05" rx="0.5" fill="#e8401c"/><rect x="4.8" y="7.2" width="2.05" height="2.05" rx="0.5" fill="#e8401c"/><rect x="7.2" y="7.2" width="2.05" height="2.05" rx="0.5" fill="#e8401c"/></svg>
<div class="t" style="left:76.19999999999999px;top:269.85999999999996px;font-size:7.4px;color:#2a2a2a;letter-spacing:-0.04px">Sitting Drop Experiment</div>
<svg style="left:77.1px;top:280.19px" width="10" height="10" viewBox="0 0 10 10"><path d="M2 0 H10 V10 H0 V2 Z" fill="#5aaee0"/><path d="M3 3 h6 M3 6 h6 M4 2 v7 M7 2 v7" stroke="#cfe8f8" stroke-width="0.8"/></svg>
<div class="t" style="left:88.4px;top:282.09px;font-size:7.4px;color:#2a2a2a;letter-spacing:-0.04px">1, 247, 906v</div>
<svg style="left:32.2px;top:295.42px" width="4.5" height="4.5" viewBox="0 0 4.5 4.5"><path d="M4 0 L4 4 L0 4 Z" fill="#666"/></svg>
<svg style="left:40.8px;top:293.82px" width="9" height="7" viewBox="0 0 9 7"><path d="M0 0 H3.3 L4.3 1 H9 V7 H0 Z" fill="#eb9a1c"/><rect x="0" y="1.8" width="9" height="5.2" fill="#f7ad2c"/></svg>
<div class="t" style="left:51.8px;top:294.32px;font-size:7.4px;color:#2a2a2a;letter-spacing:-0.04px">FMLX</div>
<svg style="left:44.7px;top:307.15000000000003px" width="4" height="5" viewBox="0 0 4 5"><path d="M0 0 L3.5 2.5 L0 5 Z" fill="#555"/></svg>
<svg style="left:53.0px;top:305.75000000000006px" width="9.2" height="7.5" viewBox="0 0 9.2 7.5"><path d="M0 0 H3.3 L4.3 1 H9.2 V7.5 H0 Z" fill="#1a78c4"/><rect x="0" y="2" width="9.2" height="5.5" fill="#2192dc"/></svg>
<div class="t" style="left:64.0px;top:306.55px;font-size:7.4px;color:#2a2a2a;letter-spacing:-0.04px">Drop Tuning</div>
<svg style="left:44.7px;top:319.38px" width="4" height="5" viewBox="0 0 4 5"><path d="M0 0 L3.5 2.5 L0 5 Z" fill="#555"/></svg>
<svg style="left:53.0px;top:317.98px" width="9.2" height="7.5" viewBox="0 0 9.2 7.5"><path d="M0 0 H3.3 L4.3 1 H9.2 V7.5 H0 Z" fill="#1a78c4"/><rect x="0" y="2" width="9.2" height="5.5" fill="#2192dc"/></svg>
<div class="t" style="left:64.0px;top:318.78px;font-size:7.4px;color:#2a2a2a;letter-spacing:-0.04px">New Project</div>
<svg style="left:40.8px;top:330.21000000000004px" width="9.2" height="7.5" viewBox="0 0 9.2 7.5"><path d="M0 0 H3.3 L4.3 1 H9.2 V7.5 H0 Z" fill="#1a78c4"/><rect x="0" y="2" width="9.2" height="5.5" fill="#2192dc"/></svg>
<div class="t" style="left:51.8px;top:331.01px;font-size:7.4px;color:#2a2a2a;letter-spacing:-0.04px">New Project</div>
<svg style="left:32.5px;top:343.84000000000003px" width="4" height="5" viewBox="0 0 4 5"><path d="M0 0 L3.5 2.5 L0 5 Z" fill="#555"/></svg>
<svg style="left:40.8px;top:342.44000000000005px" width="9.2" height="7.5" viewBox="0 0 9.2 7.5"><path d="M0 0 H3.3 L4.3 1 H9.2 V7.5 H0 Z" fill="#1a78c4"/><rect x="0" y="2" width="9.2" height="5.5" fill="#2192dc"/></svg>
<div class="t" style="left:51.8px;top:343.24px;font-size:7.4px;color:#2a2a2a;letter-spacing:-0.04px">Optomization</div>
<svg style="left:20.3px;top:356.07px" width="4" height="5" viewBox="0 0 4 5"><path d="M0 0 L3.5 2.5 L0 5 Z" fill="#555"/></svg>
<svg style="left:28.6px;top:354.96999999999997px" width="9" height="7" viewBox="0 0 9 7"><path d="M0 0 H3.3 L4.3 1 H9 V7 H0 Z" fill="#eb9a1c"/><rect x="0" y="1.8" width="9" height="5.2" fill="#f7ad2c"/></svg>
<div class="t" style="left:39.6px;top:355.46999999999997px;font-size:7.4px;color:#2a2a2a;letter-spacing:-0.04px">Imaging</div>
<svg style="left:20.0px;top:368.8px" width="4.5" height="4.5" viewBox="0 0 4.5 4.5"><path d="M4 0 L4 4 L0 4 Z" fill="#666"/></svg>
<svg style="left:28.6px;top:367.2px" width="9" height="7" viewBox="0 0 9 7"><path d="M0 0 H3.3 L4.3 1 H9 V7 H0 Z" fill="#eb9a1c"/><rect x="0" y="1.8" width="9" height="5.2" fill="#f7ad2c"/></svg>
<div class="t" style="left:39.6px;top:367.7px;font-size:7.4px;color:#2a2a2a;letter-spacing:-0.04px">Searches</div>
<svg style="left:32.5px;top:380.53px" width="4" height="5" viewBox="0 0 4 5"><path d="M0 0 L3.5 2.5 L0 5 Z" fill="#555"/></svg>
<svg style="left:40.8px;top:379.42999999999995px" width="9" height="7" viewBox="0 0 9 7"><path d="M0 0 H3.3 L4.3 1 H9 V7 H0 Z" fill="#eb9a1c"/><rect x="0" y="1.8" width="9" height="5.2" fill="#f7ad2c"/></svg>
<div class="t" style="left:51.8px;top:379.92999999999995px;font-size:7.4px;color:#2a2a2a;letter-spacing:-0.04px">Sample Searches</div>
<svg style="left:41.2px;top:390.96px" width="10" height="9" viewBox="0 0 10 9"><path d="M0 0 H7 L4.3 3.5 V8 L2.7 6.8 V3.5 Z" fill="#111"/><circle cx="7.2" cy="5.8" r="1.6" fill="none" stroke="#333" stroke-width="0.75"/><path d="M8.3 6.9 L9.5 8.1" stroke="#333" stroke-width="0.8"/></svg>
<div class="t" style="left:51.8px;top:392.15999999999997px;font-size:7.4px;color:#2a2a2a;letter-spacing:-0.04px">All conditions of a project</div>
<svg style="left:41.2px;top:403.19px" width="10" height="9" viewBox="0 0 10 9"><path d="M0 0 H7 L4.3 3.5 V8 L2.7 6.8 V3.5 Z" fill="#111"/><circle cx="7.2" cy="5.8" r="1.6" fill="none" stroke="#333" stroke-width="0.75"/><path d="M8.3 6.9 L9.5 8.1" stroke="#333" stroke-width="0.8"/></svg>
<div class="t" style="left:51.8px;top:404.39px;font-size:7.4px;color:#2a2a2a;letter-spacing:-0.04px">Drops By Score</div>
<svg style="left:41.2px;top:415.41999999999996px" width="10" height="9" viewBox="0 0 10 9"><path d="M0 0 H7 L4.3 3.5 V8 L2.7 6.8 V3.5 Z" fill="#111"/><circle cx="7.2" cy="5.8" r="1.6" fill="none" stroke="#333" stroke-width="0.75"/><path d="M8.3 6.9 L9.5 8.1" stroke="#333" stroke-width="0.8"/></svg>
<div class="t" style="left:51.8px;top:416.61999999999995px;font-size:7.4px;color:#2a2a2a;letter-spacing:-0.04px">Experiment Plate By ID</div>
<svg style="left:41.2px;top:427.65px" width="10" height="9" viewBox="0 0 10 9"><path d="M0 0 H7 L4.3 3.5 V8 L2.7 6.8 V3.5 Z" fill="#111"/><circle cx="7.2" cy="5.8" r="1.6" fill="none" stroke="#333" stroke-width="0.75"/><path d="M8.3 6.9 L9.5 8.1" stroke="#333" stroke-width="0.8"/></svg>
<div class="t" style="left:51.8px;top:428.84999999999997px;font-size:7.4px;color:#2a2a2a;letter-spacing:-0.04px">New Search</div>
<svg style="left:41.2px;top:439.88px" width="10" height="9" viewBox="0 0 10 9"><path d="M0 0 H7 L4.3 3.5 V8 L2.7 6.8 V3.5 Z" fill="#111"/><circle cx="7.2" cy="5.8" r="1.6" fill="none" stroke="#333" stroke-width="0.75"/><path d="M8.3 6.9 L9.5 8.1" stroke="#333" stroke-width="0.8"/></svg>
<div class="t" style="left:51.8px;top:441.08px;font-size:7.4px;color:#2a2a2a;letter-spacing:-0.04px">Screen search</div>
<svg style="left:40.5px;top:451.91px" width="10" height="10" viewBox="0 0 10 10"><circle cx="4" cy="4" r="3.2" fill="none" stroke="#222" stroke-width="1.3"/><path d="M6.3 6.3 L9.3 9.3" stroke="#222" stroke-width="1.6"/></svg>
<div class="t" style="left:51.8px;top:453.31px;font-size:7.4px;color:#2a2a2a;letter-spacing:-0.04px">Find Experiment or Screen</div>
<div class="a" style="left:176px;top:97px;width:77.5px;height:17px;background:#fff;border-top:1.6px solid #80b4e2;border-right:1px solid #d4d4d4"></div>
<div class="t" style="left:183.3px;top:102px;font-size:6.75px;color:#3f86c9;">New Experiment*</div>
<svg style="left:243px;top:102.5px" width="5" height="5" viewBox="0 0 5 5"><path d="M0.5 0.5 L4.5 4.5 M4.5 0.5 L0.5 4.5" stroke="#3f86c9" stroke-width="1.1"/></svg>
<div class="a" style="left:253px;top:111px;width:735px;height:1px;background:#d8d8d8"></div>
<div class="a" style="left:177px;top:113.5px;width:809px;height:492px;background:#f1f1f4;border:1px solid #d6d6d6"></div>
<div class="a" style="left:914px;top:114px;width:1px;height:491px;background:#555"></div>
<div class="t" style="left:849px;top:595px;font-size:9.5px;color:#4656a6;">1, 254, 9072</div>
<div class="a" style="left:179px;top:605px;width:46px;height:12px;background:#f7f7f7;border:1px solid #dcdcdc;border-top:none"></div>
<div class="t" style="left:185px;top:609px;font-size:6.3px;color:#777;">Experiment</div>
<div class="a" style="left:225px;top:605px;width:36px;height:14px;background:#fff;border:1px solid #e2e2e2;border-top:none;border-bottom:2px solid #6aaee6"></div>
<div class="t" style="left:231px;top:609.3px;font-size:6.8px;color:#3f86c9;">Canvas</div>
<div class="a" style="left:192.2px;top:128px;width:711.3px;height:466.1px;border:3px solid #f7a21b;border-top-width:2.5px;background:#dcdcdc"></div>
<div class="a" style="left:195.40px;top:131.10px;width:25px;height:4.8px;border-radius:1px;background:linear-gradient(90deg,#8dc63f 50%,#17843a 50%);border:1px solid #2a2a2a"></div>
<div class="a" style="left:224.90px;top:131.10px;width:25.2px;height:4.8px;border-radius:1px;background:#e6e6e6;border:1px solid #666"></div>
<div class="a" style="left:195.40px;top:137.20px;width:54.6px;height:40.8px;background:linear-gradient(0deg,#1e3263 0.0px,#25aecd 0.0px);border:1px solid #333"></div>
<div class="a" style="left:195.40px;top:177.20px;width:54.6px;height:6.6px;background:#e2e2e2;border:1px solid #555;border-top:1px solid #333"></div>
<div class="a" style="left:254.55px;top:131.10px;width:25px;height:4.8px;border-radius:1px;background:linear-gradient(90deg,#8dc63f 50%,#17843a 50%);border:1px solid #2a2a2a"></div>
<div class="a" style="left:284.05px;top:131.10px;width:25.2px;height:4.8px;border-radius:1px;background:#e6e6e6;border:1px solid #666"></div>
<div class="a" style="left:254.55px;top:137.20px;width:54.6px;height:40.8px;background:linear-gradient(0deg,#1e3263 3.6px,#25aecd 3.6px);border:1px solid #333"></div>
<div class="a" style="left:254.55px;top:177.20px;width:54.6px;height:6.6px;background:#e2e2e2;border:1px solid #555;border-top:1px solid #333"></div>
<div class="a" style="left:313.70px;top:131.10px;width:25px;height:4.8px;border-radius:1px;background:linear-gradient(90deg,#8dc63f 50%,#17843a 50%);border:1px solid #2a2a2a"></div>
<div class="a" style="left:343.20px;top:131.10px;width:25.2px;height:4.8px;border-radius:1px;background:#e6e6e6;border:1px solid #666"></div>
<div class="a" style="left:313.70px;top:137.20px;width:54.6px;height:40.8px;background:linear-gradient(0deg,#1e3263 7.3px,#25aecd 7.3px);border:1px solid #333"></div>
<div class="a" style="left:313.70px;top:177.20px;width:54.6px;height:6.6px;background:#e2e2e2;border:1px solid #555;border-top:1px solid #333"></div>
<div class="a" style="left:372.85px;top:131.10px;width:25px;height:4.8px;border-radius:1px;background:linear-gradient(90deg,#8dc63f 50%,#17843a 50%);border:1px solid #2a2a2a"></div>
<div class="a" style="left:402.35px;top:131.10px;width:25.2px;height:4.8px;border-radius:1px;background:#e6e6e6;border:1px solid #666"></div>
<div class="a" style="left:372.85px;top:137.20px;width:54.6px;height:40.8px;background:linear-gradient(0deg,#1e3263 10.9px,#25aecd 10.9px);border:1px solid #333"></div>
<div class="a" style="left:372.85px;top:177.20px;width:54.6px;height:6.6px;background:#e2e2e2;border:1px solid #555;border-top:1px solid #333"></div>
<div class="a" style="left:432.00px;top:131.10px;width:25px;height:4.8px;border-radius:1px;background:linear-gradient(90deg,#8dc63f 50%,#17843a 50%);border:1px solid #2a2a2a"></div>
<div class="a" style="left:461.50px;top:131.10px;width:25.2px;height:4.8px;border-radius:1px;background:#e6e6e6;border:1px solid #666"></div>
<div class="a" style="left:432.00px;top:137.20px;width:54.6px;height:40.8px;background:linear-gradient(0deg,#1e3263 14.5px,#25aecd 14.5px);border:1px solid #333"></div>
<div class="a" style="left:432.00px;top:177.20px;width:54.6px;height:6.6px;background:#e2e2e2;border:1px solid #555;border-top:1px solid #333"></div>
<div class="a" style="left:491.15px;top:131.10px;width:25px;height:4.8px;border-radius:1px;background:linear-gradient(90deg,#8dc63f 50%,#17843a 50%);border:1px solid #2a2a2a"></div>
<div class="a" style="left:520.65px;top:131.10px;width:25.2px;height:4.8px;border-radius:1px;background:#e6e6e6;border:1px solid #666"></div>
<div class="a" style="left:491.15px;top:137.20px;width:54.6px;height:40.8px;background:linear-gradient(0deg,#1e3263 18.2px,#25aecd 18.2px);border:1px solid #333"></div>
<div class="a" style="left:491.15px;top:177.20px;width:54.6px;height:6.6px;background:#e2e2e2;border:1px solid #555;border-top:1px solid #333"></div>
<div class="a" style="left:550.30px;top:131.10px;width:25px;height:4.8px;border-radius:1px;background:linear-gradient(90deg,#8dc63f 50%,#17843a 50%);border:1px solid #2a2a2a"></div>
<div class="a" style="left:579.80px;top:131.10px;width:25.2px;height:4.8px;border-radius:1px;background:#e6e6e6;border:1px solid #666"></div>
<div class="a" style="left:550.30px;top:137.20px;width:54.6px;height:40.8px;background:linear-gradient(0deg,#1e3263 21.8px,#25aecd 21.8px);border:1px solid #333"></div>
<div class="a" style="left:550.30px;top:177.20px;width:54.6px;height:6.6px;background:#e2e2e2;border:1px solid #555;border-top:1px solid #333"></div>
<div class="a" style="left:609.45px;top:131.10px;width:25px;height:4.8px;border-radius:1px;background:linear-gradient(90deg,#8dc63f 50%,#17843a 50%);border:1px solid #2a2a2a"></div>
<div class="a" style="left:638.95px;top:131.10px;width:25.2px;height:4.8px;border-radius:1px;background:#e6e6e6;border:1px solid #666"></div>
<div class="a" style="left:609.45px;top:137.20px;width:54.6px;height:40.8px;background:linear-gradient(0deg,#1e3263 25.5px,#25aecd 25.5px);border:1px solid #333"></div>
<div class="a" style="left:609.45px;top:177.20px;width:54.6px;height:6.6px;background:#e2e2e2;border:1px solid #555;border-top:1px solid #333"></div>
<div class="a" style="left:668.60px;top:131.10px;width:25px;height:4.8px;border-radius:1px;background:linear-gradient(90deg,#8dc63f 50%,#17843a 50%);border:1px solid #2a2a2a"></div>
<div class="a" style="left:698.10px;top:131.10px;width:25.2px;height:4.8px;border-radius:1px;background:#e6e6e6;border:1px solid #666"></div>
<div class="a" style="left:668.60px;top:137.20px;width:54.6px;height:40.8px;background:linear-gradient(0deg,#1e3263 29.1px,#25aecd 29.1px);border:1px solid #333"></div>
<div class="a" style="left:668.60px;top:177.20px;width:54.6px;height:6.6px;background:#e2e2e2;border:1px solid #555;border-top:1px solid #333"></div>
<div class="a" style="left:727.75px;top:131.10px;width:25px;height:4.8px;border-radius:1px;background:linear-gradient(90deg,#8dc63f 50%,#17843a 50%);border:1px solid #2a2a2a"></div>
<div class="a" style="left:757.25px;top:131.10px;width:25.2px;height:4.8px;border-radius:1px;background:#e6e6e6;border:1px solid #666"></div>
<div class="a" style="left:727.75px;top:137.20px;width:54.6px;height:40.8px;background:linear-gradient(0deg,#1e3263 32.7px,#25aecd 32.7px);border:1px solid #333"></div>
<div class="a" style="left:727.75px;top:177.20px;width:54.6px;height:6.6px;background:#e2e2e2;border:1px solid #555;border-top:1px solid #333"></div>
<div class="a" style="left:786.90px;top:131.10px;width:25px;height:4.8px;border-radius:1px;background:linear-gradient(90deg,#8dc63f 50%,#17843a 50%);border:1px solid #2a2a2a"></div>
<div class="a" style="left:816.40px;top:131.10px;width:25.2px;height:4.8px;border-radius:1px;background:#e6e6e6;border:1px solid #666"></div>
<div class="a" style="left:786.90px;top:137.20px;width:54.6px;height:40.8px;background:linear-gradient(0deg,#1e3263 36.4px,#25aecd 36.4px);border:1px solid #333"></div>
<div class="a" style="left:786.90px;top:177.20px;width:54.6px;height:6.6px;background:#e2e2e2;border:1px solid #555;border-top:1px solid #333"></div>
<div class="a" style="left:846.05px;top:131.10px;width:25px;height:4.8px;border-radius:1px;background:linear-gradient(90deg,#8dc63f 50%,#17843a 50%);border:1px solid #2a2a2a"></div>
<div class="a" style="left:875.55px;top:131.10px;width:25.2px;height:4.8px;border-radius:1px;background:#e6e6e6;border:1px solid #666"></div>
<div class="a" style="left:846.05px;top:137.20px;width:54.6px;height:40.8px;background:linear-gradient(0deg,#1e3263 40.0px,#25aecd 40.0px);border:1px solid #333"></div>
<div class="a" style="left:846.05px;top:177.20px;width:54.6px;height:6.6px;background:#e2e2e2;border:1px solid #555;border-top:1px solid #333"></div>
<div class="a" style="left:195.40px;top:189.37px;width:25px;height:4.8px;border-radius:1px;background:linear-gradient(90deg,#8dc63f 50%,#17843a 50%);border:1px solid #2a2a2a"></div>
<div class="a" style="left:224.90px;top:189.37px;width:25.2px;height:4.8px;border-radius:1px;background:#e6e6e6;border:1px solid #666"></div>
<div class="a" style="left:195.40px;top:195.47px;width:54.6px;height:40.8px;background:linear-gradient(0deg,#1e3263 0.0px,#25aecd 0.0px);border:1px solid #333"></div>
<div class="a" style="left:195.40px;top:235.47px;width:54.6px;height:6.6px;background:#e2e2e2;border:1px solid #555;border-top:1px solid #333"></div>
<div class="a" style="left:254.55px;top:189.37px;width:25px;height:4.8px;border-radius:1px;background:linear-gradient(90deg,#8dc63f 50%,#17843a 50%);border:1px solid #2a2a2a"></div>
<div class="a" style="left:284.05px;top:189.37px;width:25.2px;height:4.8px;border-radius:1px;background:#e6e6e6;border:1px solid #666"></div>
<div class="a" style="left:254.55px;top:195.47px;width:54.6px;height:40.8px;background:linear-gradient(0deg,#1e3263 3.6px,#25aecd 3.6px);border:1px solid #333"></div>
<div class="a" style="left:254.55px;top:235.47px;width:54.6px;height:6.6px;background:#e2e2e2;border:1px solid #555;border-top:1px solid #333"></div>
<div class="a" style="left:313.70px;top:189.37px;width:25px;height:4.8px;border-radius:1px;background:linear-gradient(90deg,#8dc63f 50%,#17843a 50%);border:1px solid #2a2a2a"></div>
<div class="a" style="left:343.20px;top:189.37px;width:25.2px;height:4.8px;border-radius:1px;background:#e6e6e6;border:1px solid #666"></div>
<div class="a" style="left:313.70px;top:195.47px;width:54.6px;height:40.8px;background:linear-gradient(0deg,#1e3263 7.3px,#25aecd 7.3px);border:1px solid #333"></div>
<div class="a" style="left:313.70px;top:235.47px;width:54.6px;height:6.6px;background:#e2e2e2;border:1px solid #555;border-top:1px solid #333"></div>
<div class="a" style="left:372.85px;top:189.37px;width:25px;height:4.8px;border-radius:1px;background:linear-gradient(90deg,#8dc63f 50%,#17843a 50%);border:1px solid #2a2a2a"></div>
<div class="a" style="left:402.35px;top:189.37px;width:25.2px;height:4.8px;border-radius:1px;background:#e6e6e6;border:1px solid #666"></div>
<div class="a" style="left:372.85px;top:195.47px;width:54.6px;height:40.8px;background:linear-gradient(0deg,#1e3263 10.9px,#25aecd 10.9px);border:1px solid #333"></div>
<div class="a" style="left:372.85px;top:235.47px;width:54.6px;height:6.6px;background:#e2e2e2;border:1px solid #555;border-top:1px solid #333"></div>
<div class="a" style="left:432.00px;top:189.37px;width:25px;height:4.8px;border-radius:1px;background:linear-gradient(90deg,#8dc63f 50%,#17843a 50%);border:1px solid #2a2a2a"></div>
<div class="a" style="left:461.50px;top:189.37px;width:25.2px;height:4.8px;border-radius:1px;background:#e6e6e6;border:1px solid #666"></div>
<div class="a" style="left:432.00px;top:195.47px;width:54.6px;height:40.8px;background:linear-gradient(0deg,#1e3263 14.5px,#25aecd 14.5px);border:1px solid #333"></div>
<div class="a" style="left:432.00px;top:235.47px;width:54.6px;height:6.6px;background:#e2e2e2;border:1px solid #555;border-top:1px solid #333"></div>
<div class="a" style="left:491.15px;top:189.37px;width:25px;height:4.8px;border-radius:1px;background:linear-gradient(90deg,#8dc63f 50%,#17843a 50%);border:1px solid #2a2a2a"></div>
<div class="a" style="left:520.65px;top:189.37px;width:25.2px;height:4.8px;border-radius:1px;background:#e6e6e6;border:1px solid #666"></div>
<div class="a" style="left:491.15px;top:195.47px;width:54.6px;height:40.8px;background:linear-gradient(0deg,#1e3263 18.2px,#25aecd 18.2px);border:1px solid #333"></div>
<div class="a" style="left:491.15px;top:235.47px;width:54.6px;height:6.6px;background:#e2e2e2;border:1px solid #555;border-top:1px solid #333"></div>
<div class="a" style="left:550.30px;top:189.37px;width:25px;height:4.8px;border-radius:1px;background:linear-gradient(90deg,#8dc63f 50%,#17843a 50%);border:1px solid #2a2a2a"></div>
<div class="a" style="left:579.80px;top:189.37px;width:25.2px;height:4.8px;border-radius:1px;background:#e6e6e6;border:1px solid #666"></div>
<div class="a" style="left:550.30px;top:195.47px;width:54.6px;height:40.8px;background:linear-gradient(0deg,#1e3263 21.8px,#25aecd 21.8px);border:1px solid #333"></div>
<div class="a" style="left:550.30px;top:235.47px;width:54.6px;height:6.6px;background:#e2e2e2;border:1px solid #555;border-top:1px solid #333"></div>
<div class="a" style="left:609.45px;top:189.37px;width:25px;height:4.8px;border-radius:1px;background:linear-gradient(90deg,#8dc63f 50%,#17843a 50%);border:1px solid #2a2a2a"></div>
<div class="a" style="left:638.95px;top:189.37px;width:25.2px;height:4.8px;border-radius:1px;background:#e6e6e6;border:1px solid #666"></div>
<div class="a" style="left:609.45px;top:195.47px;width:54.6px;height:40.8px;background:linear-gradient(0deg,#1e3263 25.5px,#25aecd 25.5px);border:1px solid #333"></div>
<div class="a" style="left:609.45px;top:235.47px;width:54.6px;height:6.6px;background:#e2e2e2;border:1px solid #555;border-top:1px solid #333"></div>
<div class="a" style="left:668.60px;top:189.37px;width:25px;height:4.8px;border-radius:1px;background:linear-gradient(90deg,#8dc63f 50%,#17843a 50%);border:1px solid #2a2a2a"></div>
<div class="a" style="left:698.10px;top:189.37px;width:25.2px;height:4.8px;border-radius:1px;background:#e6e6e6;border:1px solid #666"></div>
<div class="a" style="left:668.60px;top:195.47px;width:54.6px;height:40.8px;background:linear-gradient(0deg,#1e3263 29.1px,#25aecd 29.1px);border:1px solid #333"></div>
<div class="a" style="left:668.60px;top:235.47px;width:54.6px;height:6.6px;background:#e2e2e2;border:1px solid #555;border-top:1px solid #333"></div>
<div class="a" style="left:727.75px;top:189.37px;width:25px;height:4.8px;border-radius:1px;background:linear-gradient(90deg,#8dc63f 50%,#17843a 50%);border:1px solid #2a2a2a"></div>
<div class="a" style="left:757.25px;top:189.37px;width:25.2px;height:4.8px;border-radius:1px;background:#e6e6e6;border:1px solid #666"></div>
<div class="a" style="left:727.75px;top:195.47px;width:54.6px;height:40.8px;background:linear-gradient(0deg,#1e3263 32.7px,#25aecd 32.7px);border:1px solid #333"></div>
<div class="a" style="left:727.75px;top:235.47px;width:54.6px;height:6.6px;background:#e2e2e2;border:1px solid #555;border-top:1px solid #333"></div>
<div class="a" style="left:786.90px;top:189.37px;width:25px;height:4.8px;border-radius:1px;background:linear-gradient(90deg,#8dc63f 50%,#17843a 50%);border:1px solid #2a2a2a"></div>
<div class="a" style="left:816.40px;top:189.37px;width:25.2px;height:4.8px;border-radius:1px;background:#e6e6e6;border:1px solid #666"></div>
<div class="a" style="left:786.90px;top:195.47px;width:54.6px;height:40.8px;background:linear-gradient(0deg,#1e3263 36.4px,#25aecd 36.4px);border:1px solid #333"></div>
<div class="a" style="left:786.90px;top:235.47px;width:54.6px;height:6.6px;background:#e2e2e2;border:1px solid #555;border-top:1px solid #333"></div>
<div class="a" style="left:846.05px;top:189.37px;width:25px;height:4.8px;border-radius:1px;background:linear-gradient(90deg,#8dc63f 50%,#17843a 50%);border:1px solid #2a2a2a"></div>
<div class="a" style="left:875.55px;top:189.37px;width:25.2px;height:4.8px;border-radius:1px;background:#e6e6e6;border:1px solid #666"></div>
<div class="a" style="left:846.05px;top:195.47px;width:54.6px;height:40.8px;background:linear-gradient(0deg,#1e3263 40.0px,#25aecd 40.0px);border:1px solid #333"></div>
<div class="a" style="left:846.05px;top:235.47px;width:54.6px;height:6.6px;background:#e2e2e2;border:1px solid #555;border-top:1px solid #333"></div>
<div class="a" style="left:195.40px;top:247.64px;width:25px;height:4.8px;border-radius:1px;background:linear-gradient(90deg,#8dc63f 50%,#17843a 50%);border:1px solid #2a2a2a"></div>
<div class="a" style="left:224.90px;top:247.64px;width:25.2px;height:4.8px;border-radius:1px;background:#e6e6e6;border:1px solid #666"></div>
<div class="a" style="left:195.40px;top:253.74px;width:54.6px;height:40.8px;background:linear-gradient(0deg,#1e3263 0.0px,#25aecd 0.0px);border:1px solid #333"></div>
<div class="a" style="left:195.40px;top:293.74px;width:54.6px;height:6.6px;background:#e2e2e2;border:1px solid #555;border-top:1px solid #333"></div>
<div class="a" style="left:254.55px;top:247.64px;width:25px;height:4.8px;border-radius:1px;background:linear-gradient(90deg,#8dc63f 50%,#17843a 50%);border:1px solid #2a2a2a"></div>
<div class="a" style="left:284.05px;top:247.64px;width:25.2px;height:4.8px;border-radius:1px;background:#e6e6e6;border:1px solid #666"></div>
<div class="a" style="left:254.55px;top:253.74px;width:54.6px;height:40.8px;background:linear-gradient(0deg,#1e3263 3.6px,#25aecd 3.6px);border:1px solid #333"></div>
<div class="a" style="left:254.55px;top:293.74px;width:54.6px;height:6.6px;background:#e2e2e2;border:1px solid #555;border-top:1px solid #333"></div>
<div class="a" style="left:313.70px;top:247.64px;width:25px;height:4.8px;border-radius:1px;background:linear-gradient(90deg,#8dc63f 50%,#17843a 50%);border:1px solid #2a2a2a"></div>
<div class="a" style="left:343.20px;top:247.64px;width:25.2px;height:4.8px;border-radius:1px;background:#e6e6e6;border:1px solid #666"></div>
<div class="a" style="left:313.70px;top:253.74px;width:54.6px;height:40.8px;background:linear-gradient(0deg,#1e3263 7.3px,#25aecd 7.3px);border:1px solid #333"></div>
<div class="a" style="left:313.70px;top:293.74px;width:54.6px;height:6.6px;background:#e2e2e2;border:1px solid #555;border-top:1px solid #333"></div>
<div class="a" style="left:372.85px;top:247.64px;width:25px;height:4.8px;border-radius:1px;background:linear-gradient(90deg,#8dc63f 50%,#17843a 50%);border:1px solid #2a2a2a"></div>
<div class="a" style="left:402.35px;top:247.64px;width:25.2px;height:4.8px;border-radius:1px;background:#e6e6e6;border:1px solid #666"></div>
<div class="a" style="left:372.85px;top:253.74px;width:54.6px;height:40.8px;background:linear-gradient(0deg,#1e3263 10.9px,#25aecd 10.9px);border:1px solid #333"></div>
<div class="a" style="left:372.85px;top:293.74px;width:54.6px;height:6.6px;background:#e2e2e2;border:1px solid #555;border-top:1px solid #333"></div>
<div class="a" style="left:432.00px;top:247.64px;width:25px;height:4.8px;border-radius:1px;background:linear-gradient(90deg,#8dc63f 50%,#17843a 50%);border:1px solid #2a2a2a"></div>
<div class="a" style="left:461.50px;top:247.64px;width:25.2px;height:4.8px;border-radius:1px;background:#e6e6e6;border:1px solid #666"></div>
<div class="a" style="left:432.00px;top:253.74px;width:54.6px;height:40.8px;background:linear-gradient(0deg,#1e3263 14.5px,#25aecd 14.5px);border:1px solid #333"></div>
<div class="a" style="left:432.00px;top:293.74px;width:54.6px;height:6.6px;background:#e2e2e2;border:1px solid #555;border-top:1px solid #333"></div>
<div class="a" style="left:491.15px;top:247.64px;width:25px;height:4.8px;border-radius:1px;background:linear-gradient(90deg,#8dc63f 50%,#17843a 50%);border:1px solid #2a2a2a"></div>
<div class="a" style="left:520.65px;top:247.64px;width:25.2px;height:4.8px;border-radius:1px;background:#e6e6e6;border:1px solid #666"></div>
<div class="a" style="left:491.15px;top:253.74px;width:54.6px;height:40.8px;background:linear-gradient(0deg,#1e3263 18.2px,#25aecd 18.2px);border:1px solid #333"></div>
<div class="a" style="left:491.15px;top:293.74px;width:54.6px;height:6.6px;background:#e2e2e2;border:1px solid #555;border-top:1px solid #333"></div>
<div class="a" style="left:550.30px;top:247.64px;width:25px;height:4.8px;border-radius:1px;background:linear-gradient(90deg,#8dc63f 50%,#17843a 50%);border:1px solid #2a2a2a"></div>
<div class="a" style="left:579.80px;top:247.64px;width:25.2px;height:4.8px;border-radius:1px;background:#e6e6e6;border:1px solid #666"></div>
<div class="a" style="left:550.30px;top:253.74px;width:54.6px;height:40.8px;background:linear-gradient(0deg,#1e3263 21.8px,#25aecd 21.8px);border:1px solid #333"></div>
<div class="a" style="left:550.30px;top:293.74px;width:54.6px;height:6.6px;background:#e2e2e2;border:1px solid #555;border-top:1px solid #333"></div>
<div class="a" style="left:609.45px;top:247.64px;width:25px;height:4.8px;border-radius:1px;background:linear-gradient(90deg,#8dc63f 50%,#17843a 50%);border:1px solid #2a2a2a"></div>
<div class="a" style="left:638.95px;top:247.64px;width:25.2px;height:4.8px;border-radius:1px;background:#e6e6e6;border:1px solid #666"></div>
<div class="a" style="left:609.45px;top:253.74px;width:54.6px;height:40.8px;background:linear-gradient(0deg,#1e3263 25.5px,#25aecd 25.5px);border:1px solid #333"></div>
<div class="a" style="left:609.45px;top:293.74px;width:54.6px;height:6.6px;background:#e2e2e2;border:1px solid #555;border-top:1px solid #333"></div>
<div class="a" style="left:668.60px;top:247.64px;width:25px;height:4.8px;border-radius:1px;background:linear-gradient(90deg,#8dc63f 50%,#17843a 50%);border:1px solid #2a2a2a"></div>
<div class="a" style="left:698.10px;top:247.64px;width:25.2px;height:4.8px;border-radius:1px;background:#e6e6e6;border:1px solid #666"></div>
<div class="a" style="left:668.60px;top:253.74px;width:54.6px;height:40.8px;background:linear-gradient(0deg,#1e3263 29.1px,#25aecd 29.1px);border:1px solid #333"></div>
<div class="a" style="left:668.60px;top:293.74px;width:54.6px;height:6.6px;background:#e2e2e2;border:1px solid #555;border-top:1px solid #333"></div>
<div class="a" style="left:727.75px;top:247.64px;width:25px;height:4.8px;border-radius:1px;background:linear-gradient(90deg,#8dc63f 50%,#17843a 50%);border:1px solid #2a2a2a"></div>
<div class="a" style="left:757.25px;top:247.64px;width:25.2px;height:4.8px;border-radius:1px;background:#e6e6e6;border:1px solid #666"></div>
<div class="a" style="left:727.75px;top:253.74px;width:54.6px;height:40.8px;background:linear-gradient(0deg,#1e3263 32.7px,#25aecd 32.7px);border:1px solid #333"></div>
<div class="a" style="left:727.75px;top:293.74px;width:54.6px;height:6.6px;background:#e2e2e2;border:1px solid #555;border-top:1px solid #333"></div>
<div class="a" style="left:786.90px;top:247.64px;width:25px;height:4.8px;border-radius:1px;background:linear-gradient(90deg,#8dc63f 50%,#17843a 50%);border:1px solid #2a2a2a"></div>
<div class="a" style="left:816.40px;top:247.64px;width:25.2px;height:4.8px;border-radius:1px;background:#e6e6e6;border:1px solid #666"></div>
<div class="a" style="left:786.90px;top:253.74px;width:54.6px;height:40.8px;background:linear-gradient(0deg,#1e3263 36.4px,#25aecd 36.4px);border:1px solid #333"></div>
<div class="a" style="left:786.90px;top:293.74px;width:54.6px;height:6.6px;background:#e2e2e2;border:1px solid #555;border-top:1px solid #333"></div>
<div class="a" style="left:846.05px;top:247.64px;width:25px;height:4.8px;border-radius:1px;background:linear-gradient(90deg,#8dc63f 50%,#17843a 50%);border:1px solid #2a2a2a"></div>
<div class="a" style="left:875.55px;top:247.64px;width:25.2px;height:4.8px;border-radius:1px;background:#e6e6e6;border:1px solid #666"></div>
<div class="a" style="left:846.05px;top:253.74px;width:54.6px;height:40.8px;background:linear-gradient(0deg,#1e3263 40.0px,#25aecd 40.0px);border:1px solid #333"></div>
<div class="a" style="left:846.05px;top:293.74px;width:54.6px;height:6.6px;background:#e2e2e2;border:1px solid #555;border-top:1px solid #333"></div>
<div class="a" style="left:195.40px;top:305.91px;width:25px;height:4.8px;border-radius:1px;background:linear-gradient(90deg,#8dc63f 50%,#17843a 50%);border:1px solid #2a2a2a"></div>
<div class="a" style="left:224.90px;top:305.91px;width:25.2px;height:4.8px;border-radius:1px;background:#e6e6e6;border:1px solid #666"></div>
<div class="a" style="left:195.40px;top:312.01px;width:54.6px;height:40.8px;background:linear-gradient(0deg,#1e3263 0.0px,#25aecd 0.0px);border:1px solid #333"></div>
<div class="a" style="left:195.40px;top:352.01px;width:54.6px;height:6.6px;background:#e2e2e2;border:1px solid #555;border-top:1px solid #333"></div>
<div class="a" style="left:254.55px;top:305.91px;width:25px;height:4.8px;border-radius:1px;background:linear-gradient(90deg,#8dc63f 50%,#17843a 50%);border:1px solid #2a2a2a"></div>
<div class="a" style="left:284.05px;top:305.91px;width:25.2px;height:4.8px;border-radius:1px;background:#e6e6e6;border:1px solid #666"></div>
<div class="a" style="left:254.55px;top:312.01px;width:54.6px;height:40.8px;background:linear-gradient(0deg,#1e3263 3.6px,#25aecd 3.6px);border:1px solid #333"></div>
<div class="a" style="left:254.55px;top:352.01px;width:54.6px;height:6.6px;background:#e2e2e2;border:1px solid #555;border-top:1px solid #333"></div>
<div class="a" style="left:313.70px;top:305.91px;width:25px;height:4.8px;border-radius:1px;background:linear-gradient(90deg,#8dc63f 50%,#17843a 50%);border:1px solid #2a2a2a"></div>
<div class="a" style="left:343.20px;top:305.91px;width:25.2px;height:4.8px;border-radius:1px;background:#e6e6e6;border:1px solid #666"></div>
<div class="a" style="left:313.70px;top:312.01px;width:54.6px;height:40.8px;background:linear-gradient(0deg,#1e3263 7.3px,#25aecd 7.3px);border:1px solid #333"></div>
<div class="a" style="left:313.70px;top:352.01px;width:54.6px;height:6.6px;background:#e2e2e2;border:1px solid #555;border-top:1px solid #333"></div>
<div class="a" style="left:372.85px;top:305.91px;width:25px;height:4.8px;border-radius:1px;background:linear-gradient(90deg,#8dc63f 50%,#17843a 50%);border:1px solid #2a2a2a"></div>
<div class="a" style="left:402.35px;top:305.91px;width:25.2px;height:4.8px;border-radius:1px;background:#e6e6e6;border:1px solid #666"></div>
<div class="a" style="left:372.85px;top:312.01px;width:54.6px;height:40.8px;background:linear-gradient(0deg,#1e3263 10.9px,#25aecd 10.9px);border:1px solid #333"></div>
<div class="a" style="left:372.85px;top:352.01px;width:54.6px;height:6.6px;background:#e2e2e2;border:1px solid #555;border-top:1px solid #333"></div>
<div class="a" style="left:432.00px;top:305.91px;width:25px;height:4.8px;border-radius:1px;background:linear-gradient(90deg,#8dc63f 50%,#17843a 50%);border:1px solid #2a2a2a"></div>
<div class="a" style="left:461.50px;top:305.91px;width:25.2px;height:4.8px;border-radius:1px;background:#e6e6e6;border:1px solid #666"></div>
<div class="a" style="left:432.00px;top:312.01px;width:54.6px;height:40.8px;background:linear-gradient(0deg,#1e3263 14.5px,#25aecd 14.5px);border:1px solid #333"></div>
<div class="a" style="left:432.00px;top:352.01px;width:54.6px;height:6.6px;background:#e2e2e2;border:1px solid #555;border-top:1px solid #333"></div>
<div class="a" style="left:491.15px;top:305.91px;width:25px;height:4.8px;border-radius:1px;background:linear-gradient(90deg,#8dc63f 50%,#17843a 50%);border:1px solid #2a2a2a"></div>
<div class="a" style="left:520.65px;top:305.91px;width:25.2px;height:4.8px;border-radius:1px;background:#e6e6e6;border:1px solid #666"></div>
<div class="a" style="left:491.15px;top:312.01px;width:54.6px;height:40.8px;background:linear-gradient(0deg,#1e3263 18.2px,#25aecd 18.2px);border:1px solid #333"></div>
<div class="a" style="left:491.15px;top:352.01px;width:54.6px;height:6.6px;background:#e2e2e2;border:1px solid #555;border-top:1px solid #333"></div>
<div class="a" style="left:550.30px;top:305.91px;width:25px;height:4.8px;border-radius:1px;background:linear-gradient(90deg,#8dc63f 50%,#17843a 50%);border:1px solid #2a2a2a"></div>
<div class="a" style="left:579.80px;top:305.91px;width:25.2px;height:4.8px;border-radius:1px;background:#e6e6e6;border:1px solid #666"></div>
<div class="a" style="left:550.30px;top:312.01px;width:54.6px;height:40.8px;background:linear-gradient(0deg,#1e3263 21.8px,#25aecd 21.8px);border:1px solid #333"></div>
<div class="a" style="left:550.30px;top:352.01px;width:54.6px;height:6.6px;background:#e2e2e2;border:1px solid #555;border-top:1px solid #333"></div>
<div class="a" style="left:609.45px;top:305.91px;width:25px;height:4.8px;border-radius:1px;background:linear-gradient(90deg,#8dc63f 50%,#17843a 50%);border:1px solid #2a2a2a"></div>
<div class="a" style="left:638.95px;top:305.91px;width:25.2px;height:4.8px;border-radius:1px;background:#e6e6e6;border:1px solid #666"></div>
<div class="a" style="left:609.45px;top:312.01px;width:54.6px;height:40.8px;background:linear-gradient(0deg,#1e3263 25.5px,#25aecd 25.5px);border:1px solid #333"></div>
<div class="a" style="left:609.45px;top:352.01px;width:54.6px;height:6.6px;background:#e2e2e2;border:1px solid #555;border-top:1px solid #333"></div>
<div class="a" style="left:668.60px;top:305.91px;width:25px;height:4.8px;border-radius:1px;background:linear-gradient(90deg,#8dc63f 50%,#17843a 50%);border:1px solid #2a2a2a"></div>
<div class="a" style="left:698.10px;top:305.91px;width:25.2px;height:4.8px;border-radius:1px;background:#e6e6e6;border:1px solid #666"></div>
<div class="a" style="left:668.60px;top:312.01px;width:54.6px;height:40.8px;background:linear-gradient(0deg,#1e3263 29.1px,#25aecd 29.1px);border:1px solid #333"></div>
<div class="a" style="left:668.60px;top:352.01px;width:54.6px;height:6.6px;background:#e2e2e2;border:1px solid #555;border-top:1px solid #333"></div>
<div class="a" style="left:727.75px;top:305.91px;width:25px;height:4.8px;border-radius:1px;background:linear-gradient(90deg,#8dc63f 50%,#17843a 50%);border:1px solid #2a2a2a"></div>
<div class="a" style="left:757.25px;top:305.91px;width:25.2px;height:4.8px;border-radius:1px;background:#e6e6e6;border:1px solid #666"></div>
<div class="a" style="left:727.75px;top:312.01px;width:54.6px;height:40.8px;background:linear-gradient(0deg,#1e3263 32.7px,#25aecd 32.7px);border:1px solid #333"></div>
<div class="a" style="left:727.75px;top:352.01px;width:54.6px;height:6.6px;background:#e2e2e2;border:1px solid #555;border-top:1px solid #333"></div>
<div class="a" style="left:786.90px;top:305.91px;width:25px;height:4.8px;border-radius:1px;background:linear-gradient(90deg,#8dc63f 50%,#17843a 50%);border:1px solid #2a2a2a"></div>
<div class="a" style="left:816.40px;top:305.91px;width:25.2px;height:4.8px;border-radius:1px;background:#e6e6e6;border:1px solid #666"></div>
<div class="a" style="left:786.90px;top:312.01px;width:54.6px;height:40.8px;background:linear-gradient(0deg,#1e3263 36.4px,#25aecd 36.4px);border:1px solid #333"></div>
<div class="a" style="left:786.90px;top:352.01px;width:54.6px;height:6.6px;background:#e2e2e2;border:1px solid #555;border-top:1px solid #333"></div>
<div class="a" style="left:846.05px;top:305.91px;width:25px;height:4.8px;border-radius:1px;background:linear-gradient(90deg,#8dc63f 50%,#17843a 50%);border:1px solid #2a2a2a"></div>
<div class="a" style="left:875.55px;top:305.91px;width:25.2px;height:4.8px;border-radius:1px;background:#e6e6e6;border:1px solid #666"></div>
<div class="a" style="left:846.05px;top:312.01px;width:54.6px;height:40.8px;background:linear-gradient(0deg,#1e3263 40.0px,#25aecd 40.0px);border:1px solid #333"></div>
<div class="a" style="left:846.05px;top:352.01px;width:54.6px;height:6.6px;background:#e2e2e2;border:1px solid #555;border-top:1px solid #333"></div>
<div class="a" style="left:195.40px;top:364.18px;width:25px;height:4.8px;border-radius:1px;background:linear-gradient(90deg,#8dc63f 50%,#17843a 50%);border:1px solid #2a2a2a"></div>
<div class="a" style="left:224.90px;top:364.18px;width:25.2px;height:4.8px;border-radius:1px;background:#e6e6e6;border:1px solid #666"></div>
<div class="a" style="left:195.40px;top:370.28px;width:54.6px;height:40.8px;background:linear-gradient(0deg,#1e3263 0.0px,#25aecd 0.0px);border:1px solid #333"></div>
<div class="a" style="left:195.40px;top:410.28px;width:54.6px;height:6.6px;background:#e2e2e2;border:1px solid #555;border-top:1px solid #333"></div>
<div class="a" style="left:254.55px;top:364.18px;width:25px;height:4.8px;border-radius:1px;background:linear-gradient(90deg,#8dc63f 50%,#17843a 50%);border:1px solid #2a2a2a"></div>
<div class="a" style="left:284.05px;top:364.18px;width:25.2px;height:4.8px;border-radius:1px;background:#e6e6e6;border:1px solid #666"></div>
<div class="a" style="left:254.55px;top:370.28px;width:54.6px;height:40.8px;background:linear-gradient(0deg,#1e3263 3.6px,#25aecd 3.6px);border:1px solid #333"></div>
<div class="a" style="left:254.55px;top:410.28px;width:54.6px;height:6.6px;background:#e2e2e2;border:1px solid #555;border-top:1px solid #333"></div>
<div class="a" style="left:313.70px;top:364.18px;width:25px;height:4.8px;border-radius:1px;background:linear-gradient(90deg,#8dc63f 50%,#17843a 50%);border:1px solid #2a2a2a"></div>
<div class="a" style="left:343.20px;top:364.18px;width:25.2px;height:4.8px;border-radius:1px;background:#e6e6e6;border:1px solid #666"></div>
<div class="a" style="left:313.70px;top:370.28px;width:54.6px;height:40.8px;background:linear-gradient(0deg,#1e3263 7.3px,#25aecd 7.3px);border:1px solid #333"></div>
<div class="a" style="left:313.70px;top:410.28px;width:54.6px;height:6.6px;background:#e2e2e2;border:1px solid #555;border-top:1px solid #333"></div>
<div class="a" style="left:372.85px;top:364.18px;width:25px;height:4.8px;border-radius:1px;background:linear-gradient(90deg,#8dc63f 50%,#17843a 50%);border:1px solid #2a2a2a"></div>
<div class="a" style="left:402.35px;top:364.18px;width:25.2px;height:4.8px;border-radius:1px;background:#e6e6e6;border:1px solid #666"></div>
<div class="a" style="left:372.85px;top:370.28px;width:54.6px;height:40.8px;background:linear-gradient(0deg,#1e3263 10.9px,#25aecd 10.9px);border:1px solid #333"></div>
<div class="a" style="left:372.85px;top:410.28px;width:54.6px;height:6.6px;background:#e2e2e2;border:1px solid #555;border-top:1px solid #333"></div>
<div class="a" style="left:432.00px;top:364.18px;width:25px;height:4.8px;border-radius:1px;background:linear-gradient(90deg,#8dc63f 50%,#17843a 50%);border:1px solid #2a2a2a"></div>
<div class="a" style="left:461.50px;top:364.18px;width:25.2px;height:4.8px;border-radius:1px;background:#e6e6e6;border:1px solid #666"></div>
<div class="a" style="left:432.00px;top:370.28px;width:54.6px;height:40.8px;background:linear-gradient(0deg,#1e3263 14.5px,#25aecd 14.5px);border:1px solid #333"></div>
<div class="a" style="left:432.00px;top:410.28px;width:54.6px;height:6.6px;background:#e2e2e2;border:1px solid #555;border-top:1px solid #333"></div>
<div class="a" style="left:491.15px;top:364.18px;width:25px;height:4.8px;border-radius:1px;background:linear-gradient(90deg,#8dc63f 50%,#17843a 50%);border:1px solid #2a2a2a"></div>
<div class="a" style="left:520.65px;top:364.18px;width:25.2px;height:4.8px;border-radius:1px;background:#e6e6e6;border:1px solid #666"></div>
<div class="a" style="left:491.15px;top:370.28px;width:54.6px;height:40.8px;background:linear-gradient(0deg,#1e3263 18.2px,#25aecd 18.2px);border:1px solid #333"></div>
<div class="a" style="left:491.15px;top:410.28px;width:54.6px;height:6.6px;background:#e2e2e2;border:1px solid #555;border-top:1px solid #333"></div>
<div class="a" style="left:550.30px;top:364.18px;width:25px;height:4.8px;border-radius:1px;background:linear-gradient(90deg,#8dc63f 50%,#17843a 50%);border:1px solid #2a2a2a"></div>
<div class="a" style="left:579.80px;top:364.18px;width:25.2px;height:4.8px;border-radius:1px;background:#e6e6e6;border:1px solid #666"></div>
<div class="a" style="left:550.30px;top:370.28px;width:54.6px;height:40.8px;background:linear-gradient(0deg,#1e3263 21.8px,#25aecd 21.8px);border:1px solid #333"></div>
<div class="a" style="left:550.30px;top:410.28px;width:54.6px;height:6.6px;background:#e2e2e2;border:1px solid #555;border-top:1px solid #333"></div>
<div class="a" style="left:609.45px;top:364.18px;width:25px;height:4.8px;border-radius:1px;background:linear-gradient(90deg,#8dc63f 50%,#17843a 50%);border:1px solid #2a2a2a"></div>
<div class="a" style="left:638.95px;top:364.18px;width:25.2px;height:4.8px;border-radius:1px;background:#e6e6e6;border:1px solid #666"></div>
<div class="a" style="left:609.45px;top:370.28px;width:54.6px;height:40.8px;background:linear-gradient(0deg,#1e3263 25.5px,#25aecd 25.5px);border:1px solid #333"></div>
<div class="a" style="left:609.45px;top:410.28px;width:54.6px;height:6.6px;background:#e2e2e2;border:1px solid #555;border-top:1px solid #333"></div>
<div class="a" style="left:668.60px;top:364.18px;width:25px;height:4.8px;border-radius:1px;background:linear-gradient(90deg,#8dc63f 50%,#17843a 50%);border:1px solid #2a2a2a"></div>
<div class="a" style="left:698.10px;top:364.18px;width:25.2px;height:4.8px;border-radius:1px;background:#e6e6e6;border:1px solid #666"></div>
<div class="a" style="left:668.60px;top:370.28px;width:54.6px;height:40.8px;background:linear-gradient(0deg,#1e3263 29.1px,#25aecd 29.1px);border:1px solid #333"></div>
<div class="a" style="left:668.60px;top:410.28px;width:54.6px;height:6.6px;background:#e2e2e2;border:1px solid #555;border-top:1px solid #333"></div>
<div class="a" style="left:727.75px;top:364.18px;width:25px;height:4.8px;border-radius:1px;background:linear-gradient(90deg,#8dc63f 50%,#17843a 50%);border:1px solid #2a2a2a"></div>
<div class="a" style="left:757.25px;top:364.18px;width:25.2px;height:4.8px;border-radius:1px;background:#e6e6e6;border:1px solid #666"></div>
<div class="a" style="left:727.75px;top:370.28px;width:54.6px;height:40.8px;background:linear-gradient(0deg,#1e3263 32.7px,#25aecd 32.7px);border:1px solid #333"></div>
<div class="a" style="left:727.75px;top:410.28px;width:54.6px;height:6.6px;background:#e2e2e2;border:1px solid #555;border-top:1px solid #333"></div>
<div class="a" style="left:786.90px;top:364.18px;width:25px;height:4.8px;border-radius:1px;background:linear-gradient(90deg,#8dc63f 50%,#17843a 50%);border:1px solid #2a2a2a"></div>
<div class="a" style="left:816.40px;top:364.18px;width:25.2px;height:4.8px;border-radius:1px;background:#e6e6e6;border:1px solid #666"></div>
<div class="a" style="left:786.90px;top:370.28px;width:54.6px;height:40.8px;background:linear-gradient(0deg,#1e3263 36.4px,#25aecd 36.4px);border:1px solid #333"></div>
<div class="a" style="left:786.90px;top:410.28px;width:54.6px;height:6.6px;background:#e2e2e2;border:1px solid #555;border-top:1px solid #333"></div>
<div class="a" style="left:846.05px;top:364.18px;width:25px;height:4.8px;border-radius:1px;background:linear-gradient(90deg,#8dc63f 50%,#17843a 50%);border:1px solid #2a2a2a"></div>
<div class="a" style="left:875.55px;top:364.18px;width:25.2px;height:4.8px;border-radius:1px;background:#e6e6e6;border:1px solid #666"></div>
<div class="a" style="left:846.05px;top:370.28px;width:54.6px;height:40.8px;background:linear-gradient(0deg,#1e3263 40.0px,#25aecd 40.0px);border:1px solid #333"></div>
<div class="a" style="left:846.05px;top:410.28px;width:54.6px;height:6.6px;background:#e2e2e2;border:1px solid #555;border-top:1px solid #333"></div>
<div class="a" style="left:195.40px;top:422.45px;width:25px;height:4.8px;border-radius:1px;background:linear-gradient(90deg,#8dc63f 50%,#17843a 50%);border:1px solid #2a2a2a"></div>
<div class="a" style="left:224.90px;top:422.45px;width:25.2px;height:4.8px;border-radius:1px;background:#e6e6e6;border:1px solid #666"></div>
<div class="a" style="left:195.40px;top:428.55px;width:54.6px;height:40.8px;background:linear-gradient(0deg,#1e3263 0.0px,#25aecd 0.0px);border:1px solid #333"></div>
<div class="a" style="left:195.40px;top:468.55px;width:54.6px;height:6.6px;background:#e2e2e2;border:1px solid #555;border-top:1px solid #333"></div>
<div class="a" style="left:254.55px;top:422.45px;width:25px;height:4.8px;border-radius:1px;background:linear-gradient(90deg,#8dc63f 50%,#17843a 50%);border:1px solid #2a2a2a"></div>
<div class="a" style="left:284.05px;top:422.45px;width:25.2px;height:4.8px;border-radius:1px;background:#e6e6e6;border:1px solid #666"></div>
<div class="a" style="left:254.55px;top:428.55px;width:54.6px;height:40.8px;background:linear-gradient(0deg,#1e3263 3.6px,#25aecd 3.6px);border:1px solid #333"></div>
<div class="a" style="left:254.55px;top:468.55px;width:54.6px;height:6.6px;background:#e2e2e2;border:1px solid #555;border-top:1px solid #333"></div>
<div class="a" style="left:313.70px;top:422.45px;width:25px;height:4.8px;border-radius:1px;background:linear-gradient(90deg,#8dc63f 50%,#17843a 50%);border:1px solid #2a2a2a"></div>
<div class="a" style="left:343.20px;top:422.45px;width:25.2px;height:4.8px;border-radius:1px;background:#e6e6e6;border:1px solid #666"></div>
<div class="a" style="left:313.70px;top:428.55px;width:54.6px;height:40.8px;background:linear-gradient(0deg,#1e3263 7.3px,#25aecd 7.3px);border:1px solid #333"></div>
<div class="a" style="left:313.70px;top:468.55px;width:54.6px;height:6.6px;background:#e2e2e2;border:1px solid #555;border-top:1px solid #333"></div>
<div class="a" style="left:372.85px;top:422.45px;width:25px;height:4.8px;border-radius:1px;background:linear-gradient(90deg,#8dc63f 50%,#17843a 50%);border:1px solid #2a2a2a"></div>
<div class="a" style="left:402.35px;top:422.45px;width:25.2px;height:4.8px;border-radius:1px;background:#e6e6e6;border:1px solid #666"></div>
<div class="a" style="left:372.85px;top:428.55px;width:54.6px;height:40.8px;background:linear-gradient(0deg,#1e3263 10.9px,#25aecd 10.9px);border:1px solid #333"></div>
<div class="a" style="left:372.85px;top:468.55px;width:54.6px;height:6.6px;background:#e2e2e2;border:1px solid #555;border-top:1px solid #333"></div>
<div class="a" style="left:432.00px;top:422.45px;width:25px;height:4.8px;border-radius:1px;background:linear-gradient(90deg,#8dc63f 50%,#17843a 50%);border:1px solid #2a2a2a"></div>
<div class="a" style="left:461.50px;top:422.45px;width:25.2px;height:4.8px;border-radius:1px;background:#e6e6e6;border:1px solid #666"></div>
<div class="a" style="left:432.00px;top:428.55px;width:54.6px;height:40.8px;background:linear-gradient(0deg,#1e3263 14.5px,#25aecd 14.5px);border:1px solid #333"></div>
<div class="a" style="left:432.00px;top:468.55px;width:54.6px;height:6.6px;background:#e2e2e2;border:1px solid #555;border-top:1px solid #333"></div>
<div class="a" style="left:491.15px;top:422.45px;width:25px;height:4.8px;border-radius:1px;background:linear-gradient(90deg,#8dc63f 50%,#17843a 50%);border:1px solid #2a2a2a"></div>
<div class="a" style="left:520.65px;top:422.45px;width:25.2px;height:4.8px;border-radius:1px;background:#e6e6e6;border:1px solid #666"></div>
<div class="a" style="left:491.15px;top:428.55px;width:54.6px;height:40.8px;background:linear-gradient(0deg,#1e3263 18.2px,#25aecd 18.2px);border:1px solid #333"></div>
<div class="a" style="left:491.15px;top:468.55px;width:54.6px;height:6.6px;background:#e2e2e2;border:1px solid #555;border-top:1px solid #333"></div>
<div class="a" style="left:550.30px;top:422.45px;width:25px;height:4.8px;border-radius:1px;background:linear-gradient(90deg,#8dc63f 50%,#17843a 50%);border:1px solid #2a2a2a"></div>
<div class="a" style="left:579.80px;top:422.45px;width:25.2px;height:4.8px;border-radius:1px;background:#e6e6e6;border:1px solid #666"></div>
<div class="a" style="left:550.30px;top:428.55px;width:54.6px;height:40.8px;background:linear-gradient(0deg,#1e3263 21.8px,#25aecd 21.8px);border:1px solid #333"></div>
<div class="a" style="left:550.30px;top:468.55px;width:54.6px;height:6.6px;background:#e2e2e2;border:1px solid #555;border-top:1px solid #333"></div>
<div class="a" style="left:609.45px;top:422.45px;width:25px;height:4.8px;border-radius:1px;background:linear-gradient(90deg,#8dc63f 50%,#17843a 50%);border:1px solid #2a2a2a"></div>
<div class="a" style="left:638.95px;top:422.45px;width:25.2px;height:4.8px;border-radius:1px;background:#e6e6e6;border:1px solid #666"></div>
<div class="a" style="left:609.45px;top:428.55px;width:54.6px;height:40.8px;background:linear-gradient(0deg,#1e3263 25.5px,#25aecd 25.5px);border:1px solid #333"></div>
<div class="a" style="left:609.45px;top:468.55px;width:54.6px;height:6.6px;background:#e2e2e2;border:1px solid #555;border-top:1px solid #333"></div>
<div class="a" style="left:668.60px;top:422.45px;width:25px;height:4.8px;border-radius:1px;background:linear-gradient(90deg,#8dc63f 50%,#17843a 50%);border:1px solid #2a2a2a"></div>
<div class="a" style="left:698.10px;top:422.45px;width:25.2px;height:4.8px;border-radius:1px;background:#e6e6e6;border:1px solid #666"></div>
<div class="a" style="left:668.60px;top:428.55px;width:54.6px;height:40.8px;background:linear-gradient(0deg,#1e3263 29.1px,#25aecd 29.1px);border:1px solid #333"></div>
<div class="a" style="left:668.60px;top:468.55px;width:54.6px;height:6.6px;background:#e2e2e2;border:1px solid #555;border-top:1px solid #333"></div>
<div class="a" style="left:727.75px;top:422.45px;width:25px;height:4.8px;border-radius:1px;background:linear-gradient(90deg,#8dc63f 50%,#17843a 50%);border:1px solid #2a2a2a"></div>
<div class="a" style="left:757.25px;top:422.45px;width:25.2px;height:4.8px;border-radius:1px;background:#e6e6e6;border:1px solid #666"></div>
<div class="a" style="left:727.75px;top:428.55px;width:54.6px;height:40.8px;background:linear-gradient(0deg,#1e3263 32.7px,#25aecd 32.7px);border:1px solid #333"></div>
<div class="a" style="left:727.75px;top:468.55px;width:54.6px;height:6.6px;background:#e2e2e2;border:1px solid #555;border-top:1px solid #333"></div>
<div class="a" style="left:786.90px;top:422.45px;width:25px;height:4.8px;border-radius:1px;background:linear-gradient(90deg,#8dc63f 50%,#17843a 50%);border:1px solid #2a2a2a"></div>
<div class="a" style="left:816.40px;top:422.45px;width:25.2px;height:4.8px;border-radius:1px;background:#e6e6e6;border:1px solid #666"></div>
<div class="a" style="left:786.90px;top:428.55px;width:54.6px;height:40.8px;background:linear-gradient(0deg,#1e3263 36.4px,#25aecd 36.4px);border:1px solid #333"></div>
<div class="a" style="left:786.90px;top:468.55px;width:54.6px;height:6.6px;background:#e2e2e2;border:1px solid #555;border-top:1px solid #333"></div>
<div class="a" style="left:846.05px;top:422.45px;width:25px;height:4.8px;border-radius:1px;background:linear-gradient(90deg,#8dc63f 50%,#17843a 50%);border:1px solid #2a2a2a"></div>
<div class="a" style="left:875.55px;top:422.45px;width:25.2px;height:4.8px;border-radius:1px;background:#e6e6e6;border:1px solid #666"></div>
<div class="a" style="left:846.05px;top:428.55px;width:54.6px;height:40.8px;background:linear-gradient(0deg,#1e3263 40.0px,#25aecd 40.0px);border:1px solid #333"></div>
<div class="a" style="left:846.05px;top:468.55px;width:54.6px;height:6.6px;background:#e2e2e2;border:1px solid #555;border-top:1px solid #333"></div>
<div class="a" style="left:195.40px;top:480.72px;width:25px;height:4.8px;border-radius:1px;background:linear-gradient(90deg,#8dc63f 50%,#17843a 50%);border:1px solid #2a2a2a"></div>
<div class="a" style="left:224.90px;top:480.72px;width:25.2px;height:4.8px;border-radius:1px;background:#e6e6e6;border:1px solid #666"></div>
<div class="a" style="left:195.40px;top:486.82px;width:54.6px;height:40.8px;background:linear-gradient(0deg,#1e3263 0.0px,#25aecd 0.0px);border:1px solid #333"></div>
<div class="a" style="left:195.40px;top:526.82px;width:54.6px;height:6.6px;background:#e2e2e2;border:1px solid #555;border-top:1px solid #333"></div>
<div class="a" style="left:254.55px;top:480.72px;width:25px;height:4.8px;border-radius:1px;background:linear-gradient(90deg,#8dc63f 50%,#17843a 50%);border:1px solid #2a2a2a"></div>
<div class="a" style="left:284.05px;top:480.72px;width:25.2px;height:4.8px;border-radius:1px;background:#e6e6e6;border:1px solid #666"></div>
<div class="a" style="left:254.55px;top:486.82px;width:54.6px;height:40.8px;background:linear-gradient(0deg,#1e3263 3.6px,#25aecd 3.6px);border:1px solid #333"></div>
<div class="a" style="left:254.55px;top:526.82px;width:54.6px;height:6.6px;background:#e2e2e2;border:1px solid #555;border-top:1px solid #333"></div>
<div class="a" style="left:313.70px;top:480.72px;width:25px;height:4.8px;border-radius:1px;background:linear-gradient(90deg,#8dc63f 50%,#17843a 50%);border:1px solid #2a2a2a"></div>
<div class="a" style="left:343.20px;top:480.72px;width:25.2px;height:4.8px;border-radius:1px;background:#e6e6e6;border:1px solid #666"></div>
<div class="a" style="left:313.70px;top:486.82px;width:54.6px;height:40.8px;background:linear-gradient(0deg,#1e3263 7.3px,#25aecd 7.3px);border:1px solid #333"></div>
<div class="a" style="left:313.70px;top:526.82px;width:54.6px;height:6.6px;background:#e2e2e2;border:1px solid #555;border-top:1px solid #333"></div>
<div class="a" style="left:372.85px;top:480.72px;width:25px;height:4.8px;border-radius:1px;background:linear-gradient(90deg,#8dc63f 50%,#17843a 50%);border:1px solid #2a2a2a"></div>
<div class="a" style="left:402.35px;top:480.72px;width:25.2px;height:4.8px;border-radius:1px;background:#e6e6e6;border:1px solid #666"></div>
<div class="a" style="left:372.85px;top:486.82px;width:54.6px;height:40.8px;background:linear-gradient(0deg,#1e3263 10.9px,#25aecd 10.9px);border:1px solid #333"></div>
<div class="a" style="left:372.85px;top:526.82px;width:54.6px;height:6.6px;background:#e2e2e2;border:1px solid #555;border-top:1px solid #333"></div>
<div class="a" style="left:432.00px;top:480.72px;width:25px;height:4.8px;border-radius:1px;background:linear-gradient(90deg,#8dc63f 50%,#17843a 50%);border:1px solid #2a2a2a"></div>
<div class="a" style="left:461.50px;top:480.72px;width:25.2px;height:4.8px;border-radius:1px;background:#e6e6e6;border:1px solid #666"></div>
<div class="a" style="left:432.00px;top:486.82px;width:54.6px;height:40.8px;background:linear-gradient(0deg,#1e3263 14.5px,#25aecd 14.5px);border:1px solid #333"></div>
<div class="a" style="left:432.00px;top:526.82px;width:54.6px;height:6.6px;background:#e2e2e2;border:1px solid #555;border-top:1px solid #333"></div>
<div class="a" style="left:491.15px;top:480.72px;width:25px;height:4.8px;border-radius:1px;background:linear-gradient(90deg,#8dc63f 50%,#17843a 50%);border:1px solid #2a2a2a"></div>
<div class="a" style="left:520.65px;top:480.72px;width:25.2px;height:4.8px;border-radius:1px;background:#e6e6e6;border:1px solid #666"></div>
<div class="a" style="left:491.15px;top:486.82px;width:54.6px;height:40.8px;background:linear-gradient(0deg,#1e3263 18.2px,#25aecd 18.2px);border:1px solid #333"></div>
<div class="a" style="left:491.15px;top:526.82px;width:54.6px;height:6.6px;background:#e2e2e2;border:1px solid #555;border-top:1px solid #333"></div>
<div class="a" style="left:550.30px;top:480.72px;width:25px;height:4.8px;border-radius:1px;background:linear-gradient(90deg,#8dc63f 50%,#17843a 50%);border:1px solid #2a2a2a"></div>
<div class="a" style="left:579.80px;top:480.72px;width:25.2px;height:4.8px;border-radius:1px;background:#e6e6e6;border:1px solid #666"></div>
<div class="a" style="left:550.30px;top:486.82px;width:54.6px;height:40.8px;background:linear-gradient(0deg,#1e3263 21.8px,#25aecd 21.8px);border:1px solid #333"></div>
<div class="a" style="left:550.30px;top:526.82px;width:54.6px;height:6.6px;background:#e2e2e2;border:1px solid #555;border-top:1px solid #333"></div>
<div class="a" style="left:609.45px;top:480.72px;width:25px;height:4.8px;border-radius:1px;background:linear-gradient(90deg,#8dc63f 50%,#17843a 50%);border:1px solid #2a2a2a"></div>
<div class="a" style="left:638.95px;top:480.72px;width:25.2px;height:4.8px;border-radius:1px;background:#e6e6e6;border:1px solid #666"></div>
<div class="a" style="left:609.45px;top:486.82px;width:54.6px;height:40.8px;background:linear-gradient(0deg,#1e3263 25.5px,#25aecd 25.5px);border:1px solid #333"></div>
<div class="a" style="left:609.45px;top:526.82px;width:54.6px;height:6.6px;background:#e2e2e2;border:1px solid #555;border-top:1px solid #333"></div>
<div class="a" style="left:668.60px;top:480.72px;width:25px;height:4.8px;border-radius:1px;background:linear-gradient(90deg,#8dc63f 50%,#17843a 50%);border:1px solid #2a2a2a"></div>
<div class="a" style="left:698.10px;top:480.72px;width:25.2px;height:4.8px;border-radius:1px;background:#e6e6e6;border:1px solid #666"></div>
<div class="a" style="left:668.60px;top:486.82px;width:54.6px;height:40.8px;background:linear-gradient(0deg,#1e3263 29.1px,#25aecd 29.1px);border:1px solid #333"></div>
<div class="a" style="left:668.60px;top:526.82px;width:54.6px;height:6.6px;background:#e2e2e2;border:1px solid #555;border-top:1px solid #333"></div>
<div class="a" style="left:727.75px;top:480.72px;width:25px;height:4.8px;border-radius:1px;background:linear-gradient(90deg,#8dc63f 50%,#17843a 50%);border:1px solid #2a2a2a"></div>
<div class="a" style="left:757.25px;top:480.72px;width:25.2px;height:4.8px;border-radius:1px;background:#e6e6e6;border:1px solid #666"></div>
<div class="a" style="left:727.75px;top:486.82px;width:54.6px;height:40.8px;background:linear-gradient(0deg,#1e3263 32.7px,#25aecd 32.7px);border:1px solid #333"></div>
<div class="a" style="left:727.75px;top:526.82px;width:54.6px;height:6.6px;background:#e2e2e2;border:1px solid #555;border-top:1px solid #333"></div>
<div class="a" style="left:786.90px;top:480.72px;width:25px;height:4.8px;border-radius:1px;background:linear-gradient(90deg,#8dc63f 50%,#17843a 50%);border:1px solid #2a2a2a"></div>
<div class="a" style="left:816.40px;top:480.72px;width:25.2px;height:4.8px;border-radius:1px;background:#e6e6e6;border:1px solid #666"></div>
<div class="a" style="left:786.90px;top:486.82px;width:54.6px;height:40.8px;background:linear-gradient(0deg,#1e3263 36.4px,#25aecd 36.4px);border:1px solid #333"></div>
<div class="a" style="left:786.90px;top:526.82px;width:54.6px;height:6.6px;background:#e2e2e2;border:1px solid #555;border-top:1px solid #333"></div>
<div class="a" style="left:846.05px;top:480.72px;width:25px;height:4.8px;border-radius:1px;background:linear-gradient(90deg,#8dc63f 50%,#17843a 50%);border:1px solid #2a2a2a"></div>
<div class="a" style="left:875.55px;top:480.72px;width:25.2px;height:4.8px;border-radius:1px;background:#e6e6e6;border:1px solid #666"></div>
<div class="a" style="left:846.05px;top:486.82px;width:54.6px;height:40.8px;background:linear-gradient(0deg,#1e3263 40.0px,#25aecd 40.0px);border:1px solid #333"></div>
<div class="a" style="left:846.05px;top:526.82px;width:54.6px;height:6.6px;background:#e2e2e2;border:1px solid #555;border-top:1px solid #333"></div>
<div class="a" style="left:195.40px;top:538.99px;width:25px;height:4.8px;border-radius:1px;background:linear-gradient(90deg,#8dc63f 50%,#17843a 50%);border:1px solid #2a2a2a"></div>
<div class="a" style="left:224.90px;top:538.99px;width:25.2px;height:4.8px;border-radius:1px;background:#e6e6e6;border:1px solid #666"></div>
<div class="a" style="left:195.40px;top:545.09px;width:54.6px;height:40.8px;background:linear-gradient(0deg,#1e3263 0.0px,#25aecd 0.0px);border:1px solid #333"></div>
<div class="a" style="left:195.40px;top:585.09px;width:54.6px;height:6.6px;background:#e2e2e2;border:1px solid #555;border-top:1px solid #333"></div>
<div class="a" style="left:254.55px;top:538.99px;width:25px;height:4.8px;border-radius:1px;background:linear-gradient(90deg,#8dc63f 50%,#17843a 50%);border:1px solid #2a2a2a"></div>
<div class="a" style="left:284.05px;top:538.99px;width:25.2px;height:4.8px;border-radius:1px;background:#e6e6e6;border:1px solid #666"></div>
<div class="a" style="left:254.55px;top:545.09px;width:54.6px;height:40.8px;background:linear-gradient(0deg,#1e3263 3.6px,#25aecd 3.6px);border:1px solid #333"></div>
<div class="a" style="left:254.55px;top:585.09px;width:54.6px;height:6.6px;background:#e2e2e2;border:1px solid #555;border-top:1px solid #333"></div>
<div class="a" style="left:313.70px;top:538.99px;width:25px;height:4.8px;border-radius:1px;background:linear-gradient(90deg,#8dc63f 50%,#17843a 50%);border:1px solid #2a2a2a"></div>
<div class="a" style="left:343.20px;top:538.99px;width:25.2px;height:4.8px;border-radius:1px;background:#e6e6e6;border:1px solid #666"></div>
<div class="a" style="left:313.70px;top:545.09px;width:54.6px;height:40.8px;background:linear-gradient(0deg,#1e3263 7.3px,#25aecd 7.3px);border:1px solid #333"></div>
<div class="a" style="left:313.70px;top:585.09px;width:54.6px;height:6.6px;background:#e2e2e2;border:1px solid #555;border-top:1px solid #333"></div>
<div class="a" style="left:372.85px;top:538.99px;width:25px;height:4.8px;border-radius:1px;background:linear-gradient(90deg,#8dc63f 50%,#17843a 50%);border:1px solid #2a2a2a"></div>
<div class="a" style="left:402.35px;top:538.99px;width:25.2px;height:4.8px;border-radius:1px;background:#e6e6e6;border:1px solid #666"></div>
<div class="a" style="left:372.85px;top:545.09px;width:54.6px;height:40.8px;background:linear-gradient(0deg,#1e3263 10.9px,#25aecd 10.9px);border:1px solid #333"></div>
<div class="a" style="left:372.85px;top:585.09px;width:54.6px;height:6.6px;background:#e2e2e2;border:1px solid #555;border-top:1px solid #333"></div>
<div class="a" style="left:432.00px;top:538.99px;width:25px;height:4.8px;border-radius:1px;background:linear-gradient(90deg,#8dc63f 50%,#17843a 50%);border:1px solid #2a2a2a"></div>
<div class="a" style="left:461.50px;top:538.99px;width:25.2px;height:4.8px;border-radius:1px;background:#e6e6e6;border:1px solid #666"></div>
<div class="a" style="left:432.00px;top:545.09px;width:54.6px;height:40.8px;background:linear-gradient(0deg,#1e3263 14.5px,#25aecd 14.5px);border:1px solid #333"></div>
<div class="a" style="left:432.00px;top:585.09px;width:54.6px;height:6.6px;background:#e2e2e2;border:1px solid #555;border-top:1px solid #333"></div>
<div class="a" style="left:491.15px;top:538.99px;width:25px;height:4.8px;border-radius:1px;background:linear-gradient(90deg,#8dc63f 50%,#17843a 50%);border:1px solid #2a2a2a"></div>
<div class="a" style="left:520.65px;top:538.99px;width:25.2px;height:4.8px;border-radius:1px;background:#e6e6e6;border:1px solid #666"></div>
<div class="a" style="left:491.15px;top:545.09px;width:54.6px;height:40.8px;background:linear-gradient(0deg,#1e3263 18.2px,#25aecd 18.2px);border:1px solid #333"></div>
<div class="a" style="left:491.15px;top:585.09px;width:54.6px;height:6.6px;background:#e2e2e2;border:1px solid #555;border-top:1px solid #333"></div>
<div class="a" style="left:550.30px;top:538.99px;width:25px;height:4.8px;border-radius:1px;background:linear-gradient(90deg,#8dc63f 50%,#17843a 50%);border:1px solid #2a2a2a"></div>
<div class="a" style="left:579.80px;top:538.99px;width:25.2px;height:4.8px;border-radius:1px;background:#e6e6e6;border:1px solid #666"></div>
<div class="a" style="left:550.30px;top:545.09px;width:54.6px;height:40.8px;background:linear-gradient(0deg,#1e3263 21.8px,#25aecd 21.8px);border:1px solid #333"></div>
<div class="a" style="left:550.30px;top:585.09px;width:54.6px;height:6.6px;background:#e2e2e2;border:1px solid #555;border-top:1px solid #333"></div>
<div class="a" style="left:609.45px;top:538.99px;width:25px;height:4.8px;border-radius:1px;background:linear-gradient(90deg,#8dc63f 50%,#17843a 50%);border:1px solid #2a2a2a"></div>
<div class="a" style="left:638.95px;top:538.99px;width:25.2px;height:4.8px;border-radius:1px;background:#e6e6e6;border:1px solid #666"></div>
<div class="a" style="left:609.45px;top:545.09px;width:54.6px;height:40.8px;background:linear-gradient(0deg,#1e3263 25.5px,#25aecd 25.5px);border:1px solid #333"></div>
<div class="a" style="left:609.45px;top:585.09px;width:54.6px;height:6.6px;background:#e2e2e2;border:1px solid #555;border-top:1px solid #333"></div>
<div class="a" style="left:668.60px;top:538.99px;width:25px;height:4.8px;border-radius:1px;background:linear-gradient(90deg,#8dc63f 50%,#17843a 50%);border:1px solid #2a2a2a"></div>
<div class="a" style="left:698.10px;top:538.99px;width:25.2px;height:4.8px;border-radius:1px;background:#e6e6e6;border:1px solid #666"></div>
<div class="a" style="left:668.60px;top:545.09px;width:54.6px;height:40.8px;background:linear-gradient(0deg,#1e3263 29.1px,#25aecd 29.1px);border:1px solid #333"></div>
<div class="a" style="left:668.60px;top:585.09px;width:54.6px;height:6.6px;background:#e2e2e2;border:1px solid #555;border-top:1px solid #333"></div>
<div class="a" style="left:727.75px;top:538.99px;width:25px;height:4.8px;border-radius:1px;background:linear-gradient(90deg,#8dc63f 50%,#17843a 50%);border:1px solid #2a2a2a"></div>
<div class="a" style="left:757.25px;top:538.99px;width:25.2px;height:4.8px;border-radius:1px;background:#e6e6e6;border:1px solid #666"></div>
<div class="a" style="left:727.75px;top:545.09px;width:54.6px;height:40.8px;background:linear-gradient(0deg,#1e3263 32.7px,#25aecd 32.7px);border:1px solid #333"></div>
<div class="a" style="left:727.75px;top:585.09px;width:54.6px;height:6.6px;background:#e2e2e2;border:1px solid #555;border-top:1px solid #333"></div>
<div class="a" style="left:786.90px;top:538.99px;width:25px;height:4.8px;border-radius:1px;background:linear-gradient(90deg,#8dc63f 50%,#17843a 50%);border:1px solid #2a2a2a"></div>
<div class="a" style="left:816.40px;top:538.99px;width:25.2px;height:4.8px;border-radius:1px;background:#e6e6e6;border:1px solid #666"></div>
<div class="a" style="left:786.90px;top:545.09px;width:54.6px;height:40.8px;background:linear-gradient(0deg,#1e3263 36.4px,#25aecd 36.4px);border:1px solid #333"></div>
<div class="a" style="left:786.90px;top:585.09px;width:54.6px;height:6.6px;background:#e2e2e2;border:1px solid #555;border-top:1px solid #333"></div>
<div class="a" style="left:846.05px;top:538.99px;width:25px;height:4.8px;border-radius:1px;background:linear-gradient(90deg,#8dc63f 50%,#17843a 50%);border:1px solid #2a2a2a"></div>
<div class="a" style="left:875.55px;top:538.99px;width:25.2px;height:4.8px;border-radius:1px;background:#e6e6e6;border:1px solid #666"></div>
<div class="a" style="left:846.05px;top:545.09px;width:54.6px;height:40.8px;background:linear-gradient(0deg,#1e3263 40.0px,#25aecd 40.0px);border:1px solid #333"></div>
<div class="a" style="left:846.05px;top:585.09px;width:54.6px;height:6.6px;background:#e2e2e2;border:1px solid #555;border-top:1px solid #333"></div>
<div class="t" style="left:181.85000000000002px;width:200px;text-align:center;top:120.8px;font-size:8px;color:#333;">2</div>
<div class="t" style="left:241.0px;width:200px;text-align:center;top:120.8px;font-size:8px;color:#333;">3</div>
<div class="t" style="left:300.15000000000003px;width:200px;text-align:center;top:120.8px;font-size:8px;color:#333;">4</div>
<div class="t" style="left:359.3px;width:200px;text-align:center;top:120.8px;font-size:8px;color:#333;">5</div>
<div class="t" style="left:418.44999999999993px;width:200px;text-align:center;top:120.8px;font-size:8px;color:#333;">6</div>
<div class="t" style="left:477.5999999999999px;width:200px;text-align:center;top:120.8px;font-size:8px;color:#333;">7</div>
<div class="t" style="left:536.75px;width:200px;text-align:center;top:120.8px;font-size:8px;color:#333;">8</div>
<div class="t" style="left:595.9px;width:200px;text-align:center;top:120.8px;font-size:8px;color:#333;">9</div>
<div class="t" style="left:655.05px;width:200px;text-align:center;top:120.8px;font-size:8px;color:#333;">10</div>
<div class="t" style="left:714.1999999999999px;width:200px;text-align:center;top:120.8px;font-size:8px;color:#333;">11</div>
<div class="t" style="left:773.3499999999999px;width:200px;text-align:center;top:120.8px;font-size:8px;color:#333;">12</div>
<div class="t" style="left:185.8px;top:155.2px;font-size:8.2px;color:#333;">A</div>
<div class="t" style="left:185.8px;top:213.47px;font-size:8.2px;color:#333;">B</div>
<div class="t" style="left:185.8px;top:271.74px;font-size:8.2px;color:#333;">C</div>
<div class="t" style="left:185.8px;top:330.01px;font-size:8.2px;color:#333;">D</div>
<div class="t" style="left:185.8px;top:388.28px;font-size:8.2px;color:#333;">E</div>
<div class="t" style="left:185.8px;top:446.55px;font-size:8.2px;color:#333;">F</div>
<div class="t" style="left:185.8px;top:504.82px;font-size:8.2px;color:#333;">G</div>
<div class="t" style="left:185.8px;top:563.09px;font-size:8.2px;color:#333;">H</div>
<div class="a" style="left:193px;top:121px;width:12px;height:7.5px;background:#d6d6d6;border:1px solid #bbb"></div>
<div class="a" style="left:204.8px;top:120.7px;width:45px;height:11px;background:rgba(247,168,40,0.88)"></div>
<div class="t" style="left:207px;top:124px;font-size:6.3px;color:#333;">Example Pro...</div>
<div class="a" style="left:988.5px;top:97px;width:198.5px;height:525px;background:#fff;border-left:1px solid #d8d8d8;border-bottom:1px solid #d8d8d8"></div>
<div class="a" style="left:988.5px;top:97.5px;width:198.5px;height:22.5px;background:#e4eef8"></div>
<div class="t" style="left:994px;top:104px;font-size:9.5px;color:#444;">Edit Protein Layer</div>
<svg style="left:1160px;top:103px" width="5" height="7" viewBox="0 0 5 7"><rect x="0" y="0" width="5" height="1" fill="#333"/><rect x="1.7" y="-0.8" width="1.6" height="1" fill="#333"/><rect x="0.5" y="1.6" width="4" height="5.4" fill="#333"/></svg>
<svg style="left:1175px;top:104.5px" width="5" height="5" viewBox="0 0 5 5"><path d="M0.5 0.5 L4.5 4.5 M4.5 0.5 L0.5 4.5" stroke="#444" stroke-width="1"/></svg>
<div class="t" style="left:994px;top:127.8px;font-size:7.8px;color:#444;">Name</div>
<div class="a" style="left:1021px;top:124.5px;width:161.5px;height:12.5px;background:#fff;border:1px solid #c8c8c8"></div>
<div class="t" style="left:1025px;top:128.6px;font-size:6.4px;color:#444;">Example Protein 1</div>
<div class="t" style="left:994px;top:145.8px;font-size:8px;color:#444;">Target</div>
<div class="a" style="left:1021px;top:142.5px;width:55px;height:12px;background:#fff;border:1px solid #ccc"></div>
<div class="t" style="left:1025px;top:146.3px;font-size:6.4px;color:#444;">Drop 1</div>
<div class="a" style="left:1066px;top:143px;width:10px;height:11px;background:#e8e8e8;border:1px solid #aaa"></div>
<svg style="left:1068.5px;top:146.5px" width="5" height="3.5" viewBox="0 0 5 3.5"><path d="M0.5 0.5 L2.5 3 L4.5 0.5" stroke="#333" stroke-width="1" fill="none"/></svg>
<div class="a" style="left:991.8px;top:179.8px;width:194px;height:439.5px;border:1px solid #e8e8e8;border-top-color:#eeeeee"></div>
<div class="a" style="left:1123px;top:163.5px;width:62.5px;height:16.3px;background:#f8f9fa"></div>
<div class="a" style="left:1053px;top:163.5px;width:70px;height:16.5px;background:#f0f0f0"></div>
<div class="a" style="left:992.5px;top:163px;width:60.5px;height:17.5px;background:#fff;border:1px solid #ececec;border-bottom:none"></div>
<div class="t" style="left:1009px;top:167.6px;font-size:8.6px;color:#3f86c9;">Protein</div>
<div class="t" style="left:1071px;top:167.6px;font-size:8.4px;color:#555;">Advanced</div>
<div class="a" style="left:1000px;top:187px;width:171px;height:38px;border:1px solid #ececec"></div>
<div class="t" style="left:1003px;top:190.5px;font-size:7.05px;color:#d47d3e;">Example Protein</div>
<div class="t" style="left:1003px;top:202.5px;font-size:7.05px;color:#555;">Protein : 0.2 µL</div>
<div class="t" style="left:1003px;top:214.5px;font-size:7.05px;color:#555;">Well : 0.2 µL</div>
<div class="a" style="left:14px;top:622px;width:1174px;height:20px;background:#1671bb"></div>
<svg style="left:18px;top:626px" width="13.5" height="13" viewBox="0 0 13.5 13"><rect x="0" y="0" width="13.5" height="13" rx="2" fill="#f06a22"/><path d="M2.5 3.5 H6 L7 4.5 H11 V10 H2.5 Z" fill="#fff"/></svg>
<svg style="left:41.5px;top:627px" width="10" height="10" viewBox="0 0 10 10"><rect x="0.5" y="0" width="3" height="10" rx="1.2" fill="#fff"/><rect x="6" y="0" width="3" height="10" rx="1.2" fill="#fff"/><rect x="1.2" y="4" width="1.6" height="5" fill="#1671bb"/><rect x="6.7" y="5" width="1.6" height="4" fill="#1671bb"/></svg>
<svg style="left:62px;top:627px" width="10" height="10" viewBox="0 0 10 10"><circle cx="4" cy="4" r="3.2" fill="none" stroke="#6da6da" stroke-width="1.2"/><path d="M6.3 6.3 L9.3 9.3" stroke="#6da6da" stroke-width="1.4"/></svg>
<div class="a" style="left:80px;top:624px;width:1px;height:16px;background:#3a82c4"></div>
<svg style="left:901.3px;top:626px" width="13.4" height="13" viewBox="0 0 13.4 13"><rect x="0" y="0" width="13.4" height="13" rx="1.5" fill="#f06a22"/><path d="M3 10.5 L10.5 2.5" stroke="#fff" stroke-width="1.5"/></svg>
<svg style="left:924px;top:627px" width="11" height="10.5" viewBox="0 0 11 10.5"><rect x="0.5" y="0.5" width="10" height="9.5" fill="none" stroke="#fff" stroke-width="1"/><path d="M2 8.5 L5 4.5 L7 7 L8 6 L9.5 8.5 Z" fill="#fff"/><circle cx="7.8" cy="3" r="1" fill="#fff"/></svg>
<svg style="left:946px;top:627px" width="10" height="10" viewBox="0 0 10 10"><rect x="0.5" y="0" width="3" height="10" rx="1.2" fill="#fff"/><rect x="6" y="0" width="3" height="10" rx="1.2" fill="#fff"/><rect x="1.2" y="4" width="1.6" height="5" fill="#1671bb"/><rect x="6.7" y="5" width="1.6" height="4" fill="#1671bb"/></svg>
<svg style="left:967px;top:627px" width="11" height="11" viewBox="0 0 11 11"><rect x="0" y="0" width="5" height="5" fill="#fff"/><rect x="6" y="0" width="5" height="5" fill="#fff"/><rect x="0" y="6" width="5" height="5" fill="#fff"/><rect x="6" y="6" width="5" height="5" fill="#fff"/><path d="M2.5 1.2 V3.8 M7.5 1.3 H8.8 L7.8 3.8 M1.6 7.3 H3.3 L2.2 8.3 L3.3 9.7 H1.6 M8.6 7.2 L7.2 9 H9.2 M8.6 7.2 V9.8" stroke="#1671bb" stroke-width="0.7" fill="none"/></svg>
<div class="a" style="left:988px;top:624px;width:1px;height:16px;background:#3a82c4"></div>
<svg style="left:991px;top:627px" width="9" height="10" viewBox="0 0 9 10"><rect x="0" y="3" width="3.8" height="7" fill="#fff"/><rect x="5.2" y="3" width="3.8" height="7" fill="#fff"/><rect x="1" y="0" width="2" height="3" fill="#fff"/><rect x="6" y="0" width="2" height="3" fill="#fff"/><rect x="3" y="4" width="3" height="2" fill="#fff"/></svg>
<svg style="left:1012px;top:627px" width="9" height="10" viewBox="0 0 9 10"><path d="M4.5 0 L9 10 L4.5 7 L0 10 Z" fill="#fff"/></svg>
<svg style="left:1033px;top:628px" width="11" height="9" viewBox="0 0 11 9"><path d="M0 0.8 h11 M0 3.3 h11 M0 5.8 h11 M0 8.3 h7" stroke="#fff" stroke-width="1.2"/></svg>
<div class="a" style="left:1052px;top:624px;width:1px;height:16px;background:#3a82c4"></div>
<div class="a" style="left:1060px;top:632px;width:6px;height:1.3px;background:#333"></div>
<div class="a" style="left:1067px;top:631.8px;width:68px;height:2px;background:#fff;border-top:0.5px solid #444"></div>
<div class="a" style="left:1095px;top:628.5px;width:3px;height:7px;background:#fff;border:1px solid #444"></div>
<svg style="left:1137px;top:629.5px" width="6" height="6" viewBox="0 0 6 6"><path d="M3 0 V6 M0 3 H6" stroke="#333" stroke-width="1.2"/></svg>
<div class="t" style="left:1146px;top:628.3px;font-size:7.6px;color:#f4f8fc;">42%</div>
<svg style="left:1170px;top:627px" width="10" height="10" viewBox="0 0 10 10"><path d="M0.5 3 V0.5 H3 M7 0.5 H9.5 V3 M9.5 7 V9.5 H7 M3 9.5 H0.5 V7" stroke="#fff" stroke-width="1" fill="none"/><rect x="3" y="3" width="4" height="4" fill="none" stroke="#fff" stroke-width="1.2"/></svg></body></html>
